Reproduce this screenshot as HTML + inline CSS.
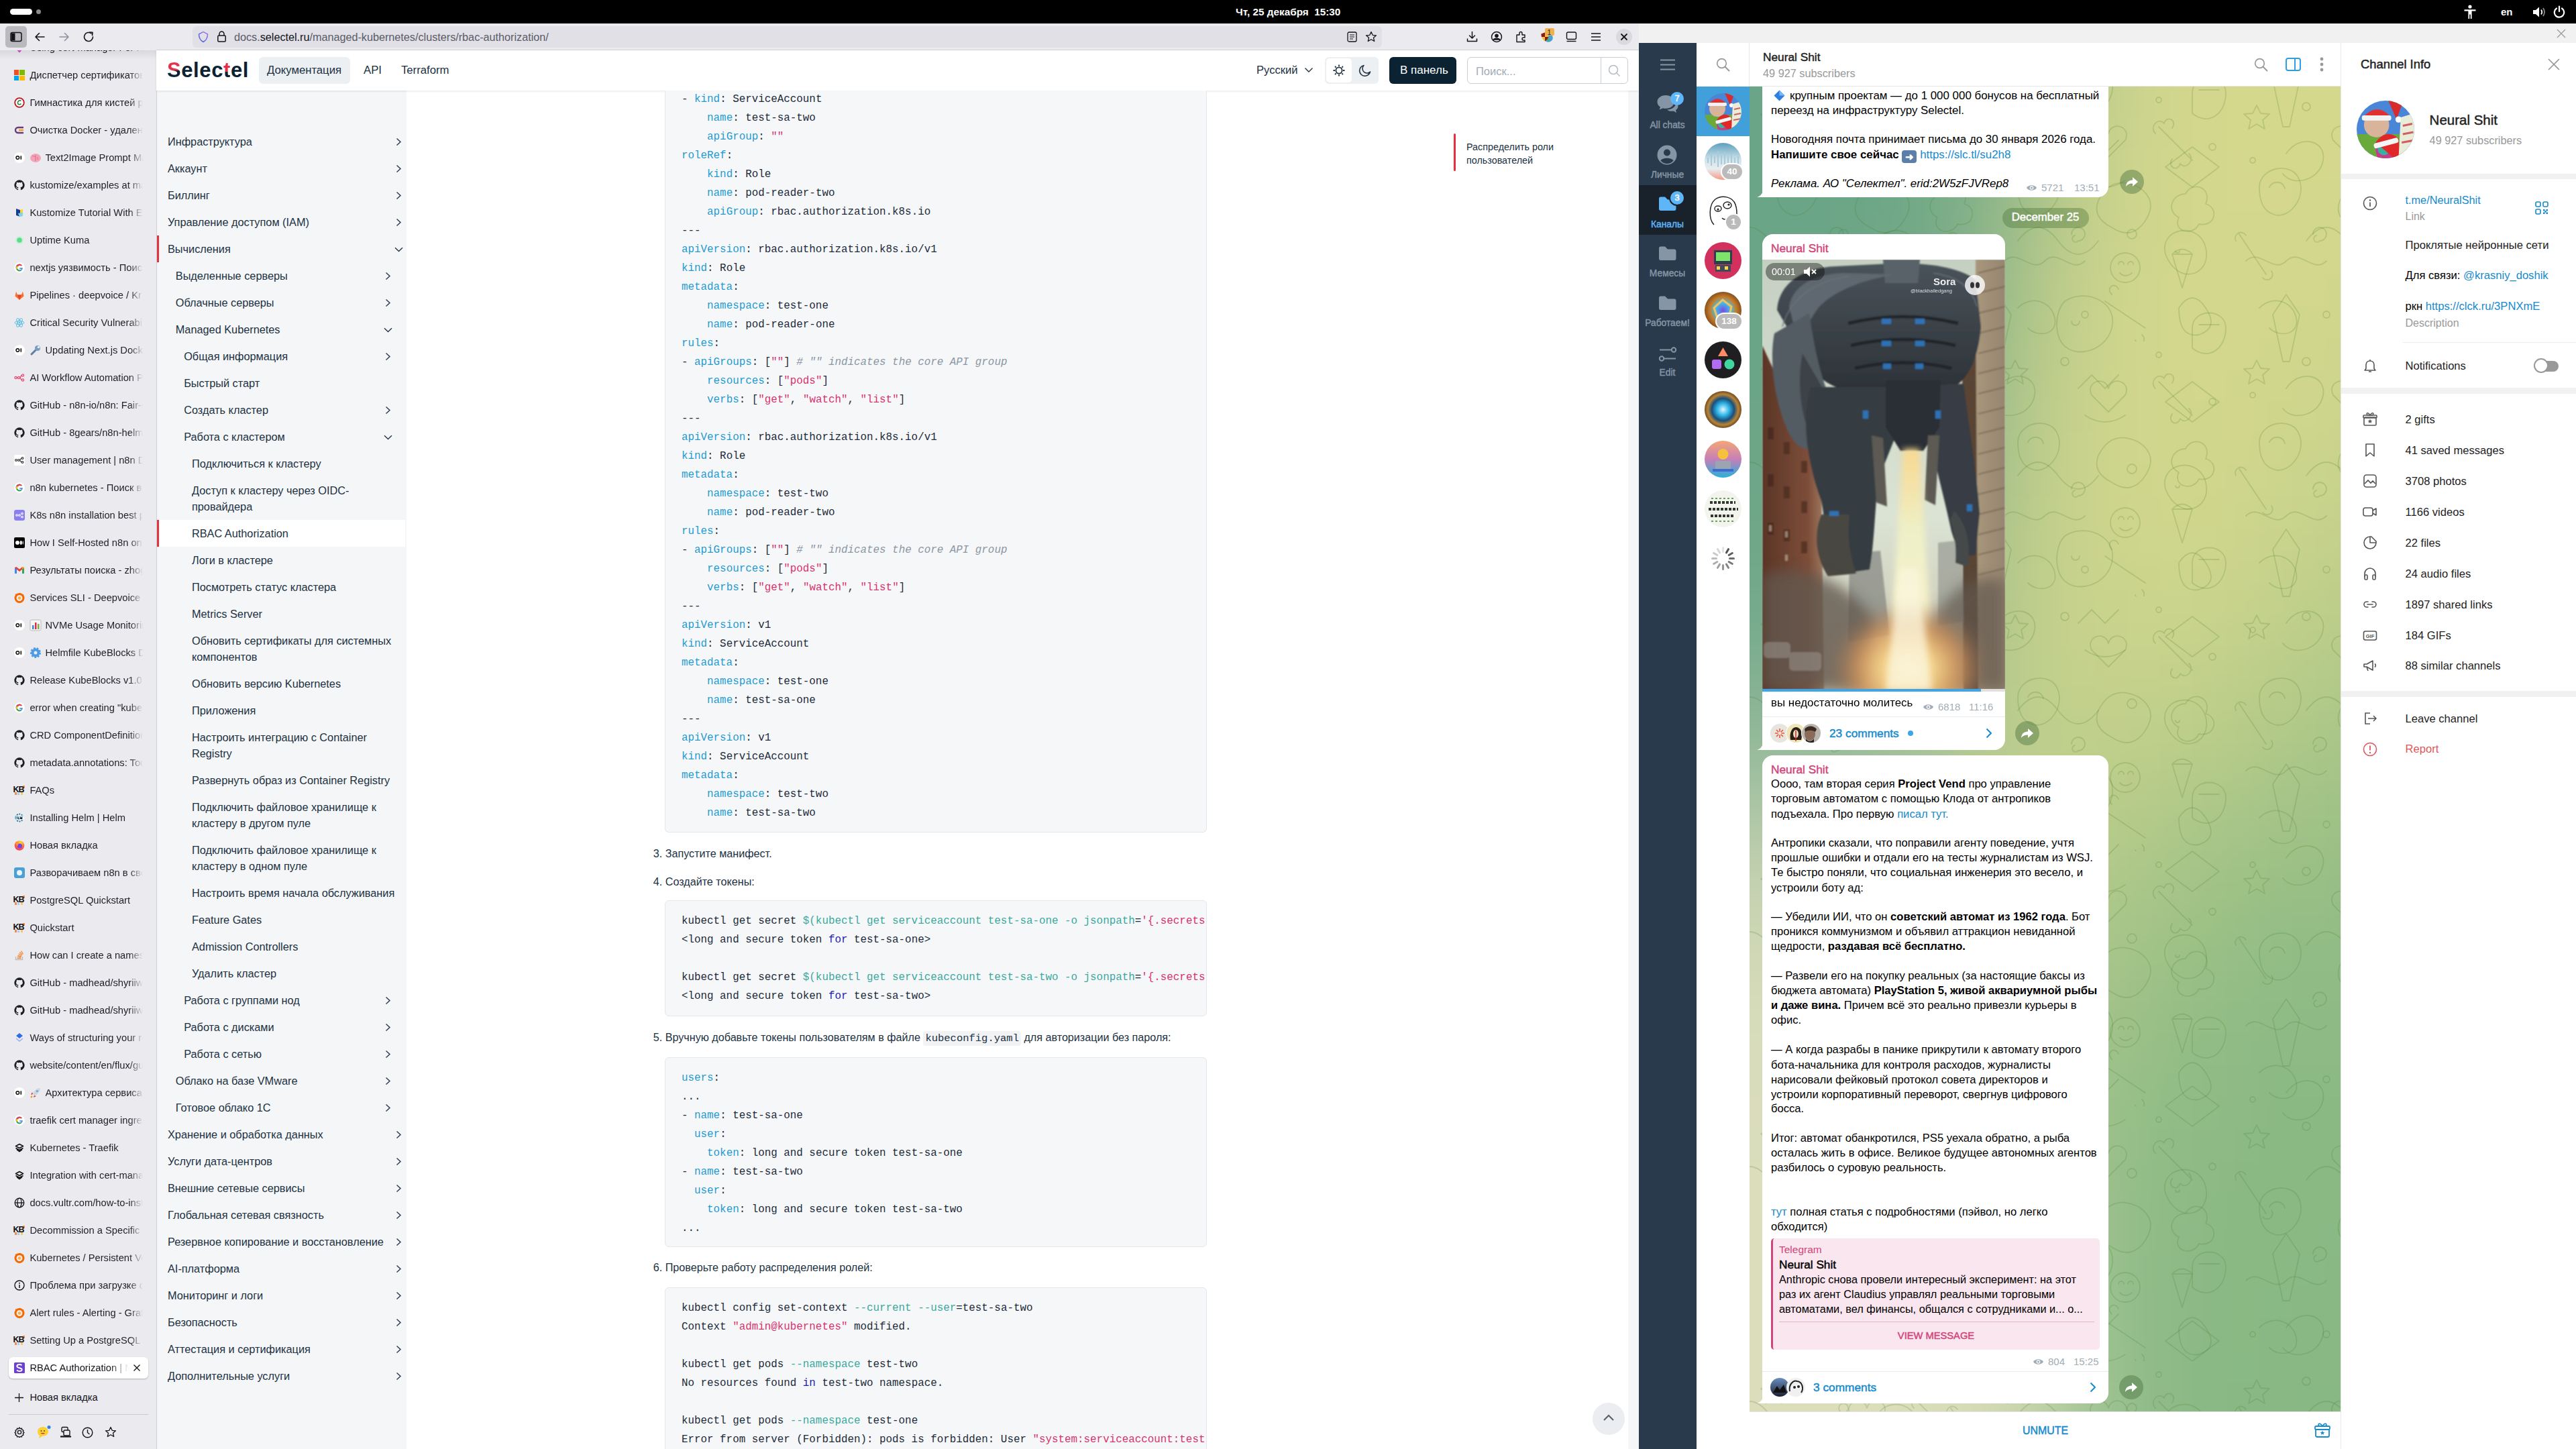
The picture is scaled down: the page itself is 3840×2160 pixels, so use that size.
<!DOCTYPE html>
<html><head><meta charset="utf-8"><title>screen</title>
<style>
html,body{margin:0;padding:0;}
body{width:3840px;height:2160px;overflow:hidden;position:relative;background:#000;font-family:"Liberation Sans",sans-serif;}
div{position:absolute;white-space:pre;box-sizing:border-box;}
.fl{position:absolute;overflow:hidden;}
b{font-weight:700;}
</style></head><body>
<div style="left:0px;top:0px;width:3840px;height:35px;background:#000;"></div><div style="left:15px;top:13px;width:33px;height:9px;background:#fff;border-radius:5px;"></div><div style="left:54px;top:14px;width:7px;height:7px;background:#8a8a8a;border-radius:50%;"></div><div style="left:1842.0px;top:7.5px;font-size:15.3px;line-height:20px;color:#fff;font-weight:700;">Чт, 25 декабря  15:30</div><svg style="position:absolute;left:3672px;top:7px;" width="20" height="22" viewBox="0 0 20 22"><circle cx="10" cy="3" r="2.6" fill="#fff"/><path d="M1.5 7.2 L18.5 7.2 L18.5 9.6 L12.6 9.6 L12.6 21 L10.8 21 L10.8 14.5 L9.2 14.5 L9.2 21 L7.4 21 L7.4 9.6 L1.5 9.6 Z" fill="#fff"/></svg><div style="left:3728.0px;top:7.5px;font-size:15px;line-height:20px;color:#fff;font-weight:700;">en</div><svg style="position:absolute;left:3775px;top:8px;" width="22" height="20" viewBox="0 0 22 20"><path d="M1 7 H5 L10 2.5 V17.5 L5 13 H1 Z" fill="#fff"/><path d="M13 6.5 Q15.5 10 13 13.5" stroke="#fff" stroke-width="1.8" fill="none"/><path d="M16 4 Q20 10 16 16" stroke="#888" stroke-width="1.8" fill="none"/></svg><svg style="position:absolute;left:3805px;top:8px;" width="20" height="20" viewBox="0 0 20 20"><path d="M6 4.5 A7.2 7.2 0 1 0 14 4.5" stroke="#fff" stroke-width="2.2" fill="none" stroke-linecap="round"/><path d="M10 1.5 V9" stroke="#fff" stroke-width="2.2" stroke-linecap="round"/></svg><div style="left:0px;top:35px;width:2443px;height:2125px;background:#ebebef;"></div><div style="left:233px;top:74px;width:2210px;height:1px;background:#d4d4da;"></div><div style="left:8px;top:39px;width:32px;height:32px;background:#b9b9be;border-radius:5px;"></div><svg style="position:absolute;left:15px;top:47px;" width="18" height="16" viewBox="0 0 18 16"><rect x="1" y="1.5" width="16" height="13" rx="2.5" fill="none" stroke="#15141a" stroke-width="1.5"/><rect x="2" y="2.5" width="5.5" height="11" fill="#15141a"/></svg><svg style="position:absolute;left:51px;top:47px;" width="17" height="16" viewBox="0 0 17 16"><path d="M15 8 H2 M7.5 2.5 L2 8 L7.5 13.5" fill="none" stroke="#15141a" stroke-width="1.6" stroke-linecap="round" stroke-linejoin="round"/></svg><svg style="position:absolute;left:87px;top:47px;transform:scaleX(-1);" width="17" height="16" viewBox="0 0 17 16"><path d="M15 8 H2 M7.5 2.5 L2 8 L7.5 13.5" fill="none" stroke="#8f8f9d" stroke-width="1.6" stroke-linecap="round" stroke-linejoin="round"/></svg><svg style="position:absolute;left:123px;top:46px;" width="18" height="18" viewBox="0 0 18 18"><path d="M15.5 9 A6.5 6.5 0 1 1 13.2 4" fill="none" stroke="#15141a" stroke-width="1.6" stroke-linecap="round"/><path d="M10.5 2 L15 2.2 L14.6 6.8" fill="none" stroke="#15141a" stroke-width="1.6" stroke-linecap="round" stroke-linejoin="round"/></svg><div style="left:287px;top:39px;width:1773px;height:32px;background:#e0e0e6;border-radius:6px;"></div><svg style="position:absolute;left:295px;top:46px;" width="16" height="18" viewBox="0 0 16 18"><defs><linearGradient id="sg" x1="0" y1="1" x2="1" y2="0"><stop offset="0" stop-color="#3a5be0"/><stop offset="1" stop-color="#9a6cf5"/></linearGradient></defs><path d="M8 1.5 L14.5 4.8 C14.5 10.5 12 14.5 8 16.5 C4 14.5 1.5 10.5 1.5 4.8 Z" fill="none" stroke="url(#sg)" stroke-width="1.4" stroke-linejoin="round"/></svg><svg style="position:absolute;left:323px;top:45px;" width="15" height="19" viewBox="0 0 15 19"><path d="M4 8 V5.5 A3.5 3.5 0 0 1 11 5.5 V8" fill="none" stroke="#15141a" stroke-width="1.5"/><rect x="1.8" y="8" width="11.4" height="9" rx="1.5" fill="none" stroke="#15141a" stroke-width="1.5"/></svg><div style="left:349.0px;top:44.0px;font-size:16.2px;line-height:22px;color:#5b5b66;white-space:pre;">docs.<span style="color:#15141a">selectel.ru</span>/managed-kubernetes/clusters/rbac-authorization/</div><svg style="position:absolute;left:2008px;top:47px;" width="15" height="16" viewBox="0 0 15 16"><rect x="1" y="1" width="13" height="14" rx="2" fill="none" stroke="#15141a" stroke-width="1.3"/><path d="M4 5 H11 M4 8 H11 M4 11 H9" stroke="#15141a" stroke-width="1.2"/></svg><svg style="position:absolute;left:2035px;top:46px;" width="18" height="17" viewBox="0 0 18 17"><path d="M9 1.5 L11.2 6.3 L16.5 6.8 L12.5 10.3 L13.7 15.5 L9 12.8 L4.3 15.5 L5.5 10.3 L1.5 6.8 L6.8 6.3 Z" fill="none" stroke="#15141a" stroke-width="1.3" stroke-linejoin="round"/></svg><svg style="position:absolute;left:2186px;top:46px;" width="17" height="17" viewBox="0 0 17 17"><path d="M8.5 1.5 V11 M4.5 7 L8.5 11 L12.5 7 M1.5 12 V15.5 H15.5 V12" fill="none" stroke="#15141a" stroke-width="1.5" stroke-linecap="round" stroke-linejoin="round"/></svg><svg style="position:absolute;left:2222px;top:46px;" width="18" height="18" viewBox="0 0 18 18"><circle cx="9" cy="9" r="7.5" fill="none" stroke="#15141a" stroke-width="1.5"/><circle cx="9" cy="7.3" r="2.8" fill="#15141a"/><path d="M3.8 13.8 C5.5 10.5 12.5 10.5 14.2 13.8" fill="#15141a" stroke="#15141a" stroke-width="1.5"/></svg><svg style="position:absolute;left:2259px;top:46px;" width="17" height="18" viewBox="0 0 17 18"><path d="M2 6 H6 V3.5 A2 2 0 0 1 10 3.5 V6 H14 V10 H12 A2 2 0 0 0 12 14 H14 V16.5 H2 Z" fill="none" stroke="#15141a" stroke-width="1.4" stroke-linejoin="round"/></svg><svg style="position:absolute;left:2295px;top:44px;" width="22" height="22" viewBox="0 0 22 22"><circle cx="13" cy="12" r="6.8" fill="#3fa2d9"/><path d="M9 9 C11 8 13 10 12 12 C11 14 14 15 15 17" stroke="#4cae4c" stroke-width="2.2" fill="none"/><path d="M2.5 6.5 L8 4.5 L13.5 6.5 C13.5 12 11 15.5 8 17.5 C5 15.5 2.5 12 2.5 6.5 Z" fill="#f1c232"/><path d="M2.5 6.5 L8 4.5 V11 H2.9 C2.6 9.5 2.5 8 2.5 6.5 Z M8 11 H13.1 C12.5 14 10.5 16.2 8 17.5 Z" fill="#8b1a1a"/></svg><div style="left:2303px;top:42px;width:14px;height:11px;background:#f0b14c;border-radius:2px;"></div><div style="left:2306.5px;top:41.5px;font-size:10.5px;line-height:12px;color:#222;">1</div><svg style="position:absolute;left:2334px;top:47px;" width="17" height="16" viewBox="0 0 17 16"><rect x="1.5" y="1" width="14" height="10.5" rx="2" fill="none" stroke="#15141a" stroke-width="1.4"/><path d="M1.5 14.5 H15.5" stroke="#15141a" stroke-width="1.4"/></svg><svg style="position:absolute;left:2371px;top:48px;" width="16" height="14" viewBox="0 0 16 14"><path d="M1 2 H15 M1 7 H15 M1 12 H15" stroke="#15141a" stroke-width="1.5"/></svg><div style="left:2409px;top:43px;width:24px;height:24px;background:#d9d9de;border-radius:50%;"></div><svg style="position:absolute;left:2415px;top:49px;" width="12" height="12" viewBox="0 0 12 12"><path d="M2 2 L10 10 M10 2 L2 10" stroke="#15141a" stroke-width="1.8" stroke-linecap="round"/></svg><div class="fl" style="left:0;top:75px;width:233px;height:2085px;"><svg style="position:absolute;left:20.6px;top:-12px;" width="16" height="16" viewBox="0 0 16 16"><path d="M8 2 L14 8 L8 14 L2 8 Z" fill="none" stroke="#e040e0" stroke-width="2"/></svg><div style="left:44.4px;top:-14.0px;font-size:14.7px;line-height:20px;color:#23222a;width:169px;overflow:hidden;-webkit-mask-image:linear-gradient(to right,#000 149px,transparent 169px);">Using cert-manager For Kubernetes</div><div style="left:20.6px;top:29px;width:7.5px;height:7.5px;background:#f25022;"></div><div style="left:29.1px;top:29px;width:7.5px;height:7.5px;background:#7fba00;"></div><div style="left:20.6px;top:37.5px;width:7.5px;height:7.5px;background:#00a4ef;"></div><div style="left:29.1px;top:37.5px;width:7.5px;height:7.5px;background:#ffb900;"></div><div style="left:44.4px;top:27.0px;font-size:14.7px;line-height:20px;color:#23222a;width:169px;overflow:hidden;-webkit-mask-image:linear-gradient(to right,#000 149px,transparent 169px);">Диспетчер сертификатов</div><svg style="position:absolute;left:20.6px;top:70px;" width="16" height="16" viewBox="0 0 16 16"><circle cx="8" cy="8" r="6.8" fill="#fff" stroke="#c0141c" stroke-width="1.8"/><path d="M10.5 5.3 C8 3.8 5 6 5.5 9 C6 11.5 9 11.2 10.5 9.5" fill="none" stroke="#1d7a3a" stroke-width="1.5"/></svg><div style="left:44.4px;top:68.0px;font-size:14.7px;line-height:20px;color:#23222a;width:169px;overflow:hidden;-webkit-mask-image:linear-gradient(to right,#000 149px,transparent 169px);">Гимнастика для кистей рук</div><svg style="position:absolute;left:20.6px;top:111px;" width="16" height="16" viewBox="0 0 16 16"><path d="M14 4 H6 A4 4 0 0 0 6 12 H14" fill="none" stroke="#6b3b7a" stroke-width="2.4"/><path d="M7 8 H14" stroke="#f0a020" stroke-width="2.4"/></svg><div style="left:44.4px;top:109.0px;font-size:14.7px;line-height:20px;color:#23222a;width:169px;overflow:hidden;-webkit-mask-image:linear-gradient(to right,#000 149px,transparent 169px);">Очистка Docker - удаление</div><svg style="position:absolute;left:20.6px;top:152px;" width="16" height="16" viewBox="0 0 16 16"><circle cx="8" cy="8" r="8" fill="#fff"/><circle cx="5.3" cy="8" r="2.3" fill="none" stroke="#111" stroke-width="1.5"/><path d="M10.3 5.3 V10.7" stroke="#111" stroke-width="1.6"/></svg><svg style="position:absolute;left:43.5px;top:151px;" width="18" height="18" viewBox="0 0 18 18"><ellipse cx="9" cy="9.5" rx="8" ry="6.5" fill="#f4a3b8"/><path d="M4 7 C6 5 7 9 9 7 M9 5 V14 M12 8 C13 10 11 11 13 12" stroke="#d86a8a" stroke-width="1" fill="none"/></svg><div style="left:67.5px;top:150.0px;font-size:14.7px;line-height:20px;color:#23222a;width:146px;overflow:hidden;-webkit-mask-image:linear-gradient(to right,#000 126px,transparent 146px);">Text2Image Prompt Maker</div><svg style="position:absolute;left:20.6px;top:193px;" width="16" height="16" viewBox="0 0 16 16"><path d="M8 0.3 A7.7 7.7 0 0 0 5.6 15.3 C6 15.4 6.1 15.1 6.1 14.9 V13.5 C3.9 14 3.5 12.5 3.5 12.5 C3.1 11.6 2.6 11.3 2.6 11.3 C1.9 10.8 2.7 10.8 2.7 10.8 C3.4 10.9 3.9 11.6 3.9 11.6 C4.6 12.8 5.7 12.4 6.1 12.2 C6.2 11.7 6.4 11.4 6.6 11.2 C4.9 11 3.1 10.4 3.1 7.4 C3.1 6.6 3.4 5.9 3.9 5.4 C3.8 5.2 3.5 4.4 4 3.4 C4 3.4 4.6 3.2 6.1 4.2 C6.7 4 7.4 4 8 4 C8.6 4 9.3 4 9.9 4.2 C11.4 3.2 12 3.4 12 3.4 C12.5 4.4 12.2 5.2 12.1 5.4 C12.6 5.9 12.9 6.6 12.9 7.4 C12.9 10.4 11.1 11 9.4 11.2 C9.7 11.5 9.9 11.9 9.9 12.6 V14.9 C9.9 15.1 10 15.4 10.4 15.3 A7.7 7.7 0 0 0 8 0.3 Z" fill="#1b1f23"/></svg><div style="left:44.4px;top:191.0px;font-size:14.7px;line-height:20px;color:#23222a;width:169px;overflow:hidden;-webkit-mask-image:linear-gradient(to right,#000 149px,transparent 169px);">kustomize/examples at master</div><svg style="position:absolute;left:20.6px;top:234px;" width="16" height="16" viewBox="0 0 16 16"><path d="M3 2 L9 4 V14 L3 12 Z" fill="#1b3c8c"/><path d="M9 4 L13 3 V13 L9 14 Z" fill="#f6d72a"/><path d="M6 9 L13 8 V13 L8 14 Z" fill="#7dd3f0"/></svg><div style="left:44.4px;top:232.0px;font-size:14.7px;line-height:20px;color:#23222a;width:169px;overflow:hidden;-webkit-mask-image:linear-gradient(to right,#000 149px,transparent 169px);">Kustomize Tutorial With Examples</div><svg style="position:absolute;left:20.6px;top:275px;" width="16" height="16" viewBox="0 0 16 16"><circle cx="8" cy="8" r="6" fill="#c9f0d6"/><circle cx="8" cy="8" r="3.8" fill="#5cdd8b"/></svg><div style="left:44.4px;top:273.0px;font-size:14.7px;line-height:20px;color:#23222a;width:169px;overflow:hidden;-webkit-mask-image:linear-gradient(to right,#000 149px,transparent 169px);">Uptime Kuma</div><svg style="position:absolute;left:20.6px;top:316px;" width="16" height="16" viewBox="0 0 16 16"><circle cx="8" cy="8" r="7.8" fill="#fff"/><path d="M12.6 8.2 H8.2 V9.8 H10.8 C10.4 11 9.4 11.6 8.2 11.6 A3.6 3.6 0 1 1 10.6 5.4 L11.8 4.2 A5.3 5.3 0 1 0 13 8.8 Z" fill="#4285f4"/><path d="M3.5 5.5 L5.3 6.8 A3.6 3.6 0 0 1 10.6 5.4 L11.8 4.2 A5.3 5.3 0 0 0 3.5 5.5 Z" fill="#ea4335"/><path d="M3.4 10.4 L5.2 9.2 A3.6 3.6 0 0 0 9.8 11.3 L11 12.6 A5.3 5.3 0 0 1 3.4 10.4 Z" fill="#34a853"/><path d="M3.5 5.5 A5.3 5.3 0 0 0 3.4 10.4 L5.2 9.2 A3.6 3.6 0 0 1 5.3 6.8 Z" fill="#fbbc05"/></svg><div style="left:44.4px;top:314.0px;font-size:14.7px;line-height:20px;color:#23222a;width:169px;overflow:hidden;-webkit-mask-image:linear-gradient(to right,#000 149px,transparent 169px);">nextjs уязвимость - Поиск</div><svg style="position:absolute;left:20.6px;top:357px;" width="16" height="16" viewBox="0 0 16 16"><path d="M8 15 L1.5 9.5 L3 2.5 L5 7.5 H11 L13 2.5 L14.5 9.5 Z" fill="#fc6d26"/><path d="M8 15 L5 7.5 H11 Z" fill="#e24329"/></svg><div style="left:44.4px;top:355.0px;font-size:14.7px;line-height:20px;color:#23222a;width:169px;overflow:hidden;-webkit-mask-image:linear-gradient(to right,#000 149px,transparent 169px);">Pipelines · deepvoice / Kr</div><svg style="position:absolute;left:20.6px;top:398px;" width="16" height="16" viewBox="0 0 16 16"><g fill="none" stroke="#61bfe0" stroke-width="1"><ellipse cx="8" cy="8" rx="7" ry="2.7"/><ellipse cx="8" cy="8" rx="7" ry="2.7" transform="rotate(60 8 8)"/><ellipse cx="8" cy="8" rx="7" ry="2.7" transform="rotate(-60 8 8)"/></g><circle cx="8" cy="8" r="1.4" fill="#61bfe0"/></svg><div style="left:44.4px;top:396.0px;font-size:14.7px;line-height:20px;color:#23222a;width:169px;overflow:hidden;-webkit-mask-image:linear-gradient(to right,#000 149px,transparent 169px);">Critical Security Vulnerability</div><svg style="position:absolute;left:20.6px;top:439px;" width="16" height="16" viewBox="0 0 16 16"><circle cx="8" cy="8" r="8" fill="#fff"/><circle cx="5.3" cy="8" r="2.3" fill="none" stroke="#111" stroke-width="1.5"/><path d="M10.3 5.3 V10.7" stroke="#111" stroke-width="1.6"/></svg><svg style="position:absolute;left:43.5px;top:438px;" width="18" height="18" viewBox="0 0 18 18"><path d="M3 15 L10 8" stroke="#5a7fa8" stroke-width="3" stroke-linecap="round"/><circle cx="12" cy="6" r="4" fill="#7a9cc0"/><circle cx="13.5" cy="4.5" r="1.8" fill="#ebebef"/></svg><div style="left:67.5px;top:437.0px;font-size:14.7px;line-height:20px;color:#23222a;width:146px;overflow:hidden;-webkit-mask-image:linear-gradient(to right,#000 126px,transparent 146px);">Updating Next.js Docker</div><svg style="position:absolute;left:20.6px;top:480px;" width="16" height="16" viewBox="0 0 16 16"><g fill="none" stroke="#ea4b71" stroke-width="1.3"><circle cx="2.5" cy="8" r="1.6"/><circle cx="7" cy="8" r="1.6"/><circle cx="13" cy="4.5" r="1.6"/><circle cx="13" cy="11.5" r="1.6"/><path d="M4 8 H5.5 M8.5 8 C10 8 10 4.5 11.5 4.5 M8.5 8 C10 8 10 11.5 11.5 11.5"/></g></svg><div style="left:44.4px;top:478.0px;font-size:14.7px;line-height:20px;color:#23222a;width:169px;overflow:hidden;-webkit-mask-image:linear-gradient(to right,#000 149px,transparent 169px);">AI Workflow Automation Platform</div><svg style="position:absolute;left:20.6px;top:521px;" width="16" height="16" viewBox="0 0 16 16"><path d="M8 0.3 A7.7 7.7 0 0 0 5.6 15.3 C6 15.4 6.1 15.1 6.1 14.9 V13.5 C3.9 14 3.5 12.5 3.5 12.5 C3.1 11.6 2.6 11.3 2.6 11.3 C1.9 10.8 2.7 10.8 2.7 10.8 C3.4 10.9 3.9 11.6 3.9 11.6 C4.6 12.8 5.7 12.4 6.1 12.2 C6.2 11.7 6.4 11.4 6.6 11.2 C4.9 11 3.1 10.4 3.1 7.4 C3.1 6.6 3.4 5.9 3.9 5.4 C3.8 5.2 3.5 4.4 4 3.4 C4 3.4 4.6 3.2 6.1 4.2 C6.7 4 7.4 4 8 4 C8.6 4 9.3 4 9.9 4.2 C11.4 3.2 12 3.4 12 3.4 C12.5 4.4 12.2 5.2 12.1 5.4 C12.6 5.9 12.9 6.6 12.9 7.4 C12.9 10.4 11.1 11 9.4 11.2 C9.7 11.5 9.9 11.9 9.9 12.6 V14.9 C9.9 15.1 10 15.4 10.4 15.3 A7.7 7.7 0 0 0 8 0.3 Z" fill="#1b1f23"/></svg><div style="left:44.4px;top:519.0px;font-size:14.7px;line-height:20px;color:#23222a;width:169px;overflow:hidden;-webkit-mask-image:linear-gradient(to right,#000 149px,transparent 169px);">GitHub - n8n-io/n8n: Fair-code</div><svg style="position:absolute;left:20.6px;top:562px;" width="16" height="16" viewBox="0 0 16 16"><path d="M8 0.3 A7.7 7.7 0 0 0 5.6 15.3 C6 15.4 6.1 15.1 6.1 14.9 V13.5 C3.9 14 3.5 12.5 3.5 12.5 C3.1 11.6 2.6 11.3 2.6 11.3 C1.9 10.8 2.7 10.8 2.7 10.8 C3.4 10.9 3.9 11.6 3.9 11.6 C4.6 12.8 5.7 12.4 6.1 12.2 C6.2 11.7 6.4 11.4 6.6 11.2 C4.9 11 3.1 10.4 3.1 7.4 C3.1 6.6 3.4 5.9 3.9 5.4 C3.8 5.2 3.5 4.4 4 3.4 C4 3.4 4.6 3.2 6.1 4.2 C6.7 4 7.4 4 8 4 C8.6 4 9.3 4 9.9 4.2 C11.4 3.2 12 3.4 12 3.4 C12.5 4.4 12.2 5.2 12.1 5.4 C12.6 5.9 12.9 6.6 12.9 7.4 C12.9 10.4 11.1 11 9.4 11.2 C9.7 11.5 9.9 11.9 9.9 12.6 V14.9 C9.9 15.1 10 15.4 10.4 15.3 A7.7 7.7 0 0 0 8 0.3 Z" fill="#1b1f23"/></svg><div style="left:44.4px;top:560.0px;font-size:14.7px;line-height:20px;color:#23222a;width:169px;overflow:hidden;-webkit-mask-image:linear-gradient(to right,#000 149px,transparent 169px);">GitHub - 8gears/n8n-helm-chart</div><svg style="position:absolute;left:20.6px;top:603px;" width="16" height="16" viewBox="0 0 16 16"><rect x="0" y="0" width="16" height="16" rx="2" fill="#fff"/><g fill="none" stroke="#444" stroke-width="1.2"><circle cx="3" cy="8" r="1.4"/><circle cx="7" cy="8" r="1.4"/><circle cx="12.5" cy="5" r="1.4"/><circle cx="12.5" cy="11" r="1.4"/><path d="M8.4 8 L11 5 M8.4 8 L11 11"/></g></svg><div style="left:44.4px;top:601.0px;font-size:14.7px;line-height:20px;color:#23222a;width:169px;overflow:hidden;-webkit-mask-image:linear-gradient(to right,#000 149px,transparent 169px);">User management | n8n Docs</div><svg style="position:absolute;left:20.6px;top:644px;" width="16" height="16" viewBox="0 0 16 16"><circle cx="8" cy="8" r="7.8" fill="#fff"/><path d="M12.6 8.2 H8.2 V9.8 H10.8 C10.4 11 9.4 11.6 8.2 11.6 A3.6 3.6 0 1 1 10.6 5.4 L11.8 4.2 A5.3 5.3 0 1 0 13 8.8 Z" fill="#4285f4"/><path d="M3.5 5.5 L5.3 6.8 A3.6 3.6 0 0 1 10.6 5.4 L11.8 4.2 A5.3 5.3 0 0 0 3.5 5.5 Z" fill="#ea4335"/><path d="M3.4 10.4 L5.2 9.2 A3.6 3.6 0 0 0 9.8 11.3 L11 12.6 A5.3 5.3 0 0 1 3.4 10.4 Z" fill="#34a853"/><path d="M3.5 5.5 A5.3 5.3 0 0 0 3.4 10.4 L5.2 9.2 A3.6 3.6 0 0 1 5.3 6.8 Z" fill="#fbbc05"/></svg><div style="left:44.4px;top:642.0px;font-size:14.7px;line-height:20px;color:#23222a;width:169px;overflow:hidden;-webkit-mask-image:linear-gradient(to right,#000 149px,transparent 169px);">n8n kubernetes - Поиск в Google</div><svg style="position:absolute;left:20.6px;top:685px;" width="16" height="16" viewBox="0 0 16 16"><rect x="0" y="0" width="16" height="16" rx="3" fill="#8a7ff0"/><g fill="none" stroke="#fff" stroke-width="1.1"><circle cx="4" cy="8" r="1.3"/><circle cx="8" cy="8" r="1.3"/><circle cx="12" cy="5.5" r="1.3"/><circle cx="12" cy="10.5" r="1.3"/></g></svg><div style="left:44.4px;top:683.0px;font-size:14.7px;line-height:20px;color:#23222a;width:169px;overflow:hidden;-webkit-mask-image:linear-gradient(to right,#000 149px,transparent 169px);">K8s n8n installation best practices</div><svg style="position:absolute;left:20.6px;top:726px;" width="16" height="16" viewBox="0 0 16 16"><rect x="0" y="0" width="16" height="16" rx="2" fill="#000"/><circle cx="5" cy="8" r="3" fill="#fff"/><ellipse cx="10.3" cy="8" rx="1.6" ry="3" fill="#fff"/><ellipse cx="13.3" cy="8" rx=".6" ry="2.7" fill="#fff"/></svg><div style="left:44.4px;top:724.0px;font-size:14.7px;line-height:20px;color:#23222a;width:169px;overflow:hidden;-webkit-mask-image:linear-gradient(to right,#000 149px,transparent 169px);">How I Self-Hosted n8n on Kubernetes</div><svg style="position:absolute;left:20.6px;top:767px;" width="16" height="16" viewBox="0 0 16 16"><path d="M1 4 V13 H4 V7 L8 10 L12 7 V13 H15 V4 L12.5 3 L8 6.5 L3.5 3 Z" fill="#ea4335"/><path d="M1 4 V13 H4 V7 Z" fill="#4285f4"/><path d="M12 7 V13 H15 V4 Z" fill="#34a853"/><path d="M12 7 L15 4 L12.5 3 Z" fill="#fbbc04"/></svg><div style="left:44.4px;top:765.0px;font-size:14.7px;line-height:20px;color:#23222a;width:169px;overflow:hidden;-webkit-mask-image:linear-gradient(to right,#000 149px,transparent 169px);">Результаты поиска - zhoga</div><svg style="position:absolute;left:20.6px;top:808px;" width="16" height="16" viewBox="0 0 16 16"><circle cx="8" cy="8.5" r="6" fill="none" stroke="#f46800" stroke-width="3"/><circle cx="8" cy="8.5" r="2.2" fill="#fbb03b"/><path d="M8 1 L9.5 3 M13 3 L13.5 5.5 M2.5 4 L3.5 2.5" stroke="#f46800" stroke-width="2"/></svg><div style="left:44.4px;top:806.0px;font-size:14.7px;line-height:20px;color:#23222a;width:169px;overflow:hidden;-webkit-mask-image:linear-gradient(to right,#000 149px,transparent 169px);">Services SLI - Deepvoice - Grafana</div><svg style="position:absolute;left:20.6px;top:849px;" width="16" height="16" viewBox="0 0 16 16"><circle cx="8" cy="8" r="8" fill="#fff"/><circle cx="5.3" cy="8" r="2.3" fill="none" stroke="#111" stroke-width="1.5"/><path d="M10.3 5.3 V10.7" stroke="#111" stroke-width="1.6"/></svg><svg style="position:absolute;left:43.5px;top:848px;" width="18" height="18" viewBox="0 0 18 18"><rect x="1" y="1" width="16" height="16" rx="2" fill="#f5f5f5" stroke="#bbb"/><rect x="4" y="9" width="2.5" height="6" fill="#3b88c3"/><rect x="8" y="5" width="2.5" height="10" fill="#dd2e44"/><rect x="12" y="7" width="2.5" height="8" fill="#77b255"/></svg><div style="left:67.5px;top:847.0px;font-size:14.7px;line-height:20px;color:#23222a;width:146px;overflow:hidden;-webkit-mask-image:linear-gradient(to right,#000 126px,transparent 146px);">NVMe Usage Monitoring</div><svg style="position:absolute;left:20.6px;top:890px;" width="16" height="16" viewBox="0 0 16 16"><circle cx="8" cy="8" r="8" fill="#fff"/><circle cx="5.3" cy="8" r="2.3" fill="none" stroke="#111" stroke-width="1.5"/><path d="M10.3 5.3 V10.7" stroke="#111" stroke-width="1.6"/></svg><svg style="position:absolute;left:43.5px;top:889px;" width="18" height="18" viewBox="0 0 18 18"><circle cx="9" cy="9" r="6.5" fill="#4d9be6" stroke="#4d9be6" stroke-width="3" stroke-dasharray="2.5 2"/><circle cx="9" cy="9" r="2.5" fill="#ebebef"/></svg><div style="left:67.5px;top:888.0px;font-size:14.7px;line-height:20px;color:#23222a;width:146px;overflow:hidden;-webkit-mask-image:linear-gradient(to right,#000 126px,transparent 146px);">Helmfile KubeBlocks Deploy</div><svg style="position:absolute;left:20.6px;top:931px;" width="16" height="16" viewBox="0 0 16 16"><path d="M8 0.3 A7.7 7.7 0 0 0 5.6 15.3 C6 15.4 6.1 15.1 6.1 14.9 V13.5 C3.9 14 3.5 12.5 3.5 12.5 C3.1 11.6 2.6 11.3 2.6 11.3 C1.9 10.8 2.7 10.8 2.7 10.8 C3.4 10.9 3.9 11.6 3.9 11.6 C4.6 12.8 5.7 12.4 6.1 12.2 C6.2 11.7 6.4 11.4 6.6 11.2 C4.9 11 3.1 10.4 3.1 7.4 C3.1 6.6 3.4 5.9 3.9 5.4 C3.8 5.2 3.5 4.4 4 3.4 C4 3.4 4.6 3.2 6.1 4.2 C6.7 4 7.4 4 8 4 C8.6 4 9.3 4 9.9 4.2 C11.4 3.2 12 3.4 12 3.4 C12.5 4.4 12.2 5.2 12.1 5.4 C12.6 5.9 12.9 6.6 12.9 7.4 C12.9 10.4 11.1 11 9.4 11.2 C9.7 11.5 9.9 11.9 9.9 12.6 V14.9 C9.9 15.1 10 15.4 10.4 15.3 A7.7 7.7 0 0 0 8 0.3 Z" fill="#1b1f23"/></svg><div style="left:44.4px;top:929.0px;font-size:14.7px;line-height:20px;color:#23222a;width:169px;overflow:hidden;-webkit-mask-image:linear-gradient(to right,#000 149px,transparent 169px);">Release KubeBlocks v1.0.1</div><svg style="position:absolute;left:20.6px;top:972px;" width="16" height="16" viewBox="0 0 16 16"><circle cx="8" cy="8" r="7.8" fill="#fff"/><path d="M12.6 8.2 H8.2 V9.8 H10.8 C10.4 11 9.4 11.6 8.2 11.6 A3.6 3.6 0 1 1 10.6 5.4 L11.8 4.2 A5.3 5.3 0 1 0 13 8.8 Z" fill="#4285f4"/><path d="M3.5 5.5 L5.3 6.8 A3.6 3.6 0 0 1 10.6 5.4 L11.8 4.2 A5.3 5.3 0 0 0 3.5 5.5 Z" fill="#ea4335"/><path d="M3.4 10.4 L5.2 9.2 A3.6 3.6 0 0 0 9.8 11.3 L11 12.6 A5.3 5.3 0 0 1 3.4 10.4 Z" fill="#34a853"/><path d="M3.5 5.5 A5.3 5.3 0 0 0 3.4 10.4 L5.2 9.2 A3.6 3.6 0 0 1 5.3 6.8 Z" fill="#fbbc05"/></svg><div style="left:44.4px;top:970.0px;font-size:14.7px;line-height:20px;color:#23222a;width:169px;overflow:hidden;-webkit-mask-image:linear-gradient(to right,#000 149px,transparent 169px);">error when creating "kubeblocks"</div><svg style="position:absolute;left:20.6px;top:1013px;" width="16" height="16" viewBox="0 0 16 16"><path d="M8 0.3 A7.7 7.7 0 0 0 5.6 15.3 C6 15.4 6.1 15.1 6.1 14.9 V13.5 C3.9 14 3.5 12.5 3.5 12.5 C3.1 11.6 2.6 11.3 2.6 11.3 C1.9 10.8 2.7 10.8 2.7 10.8 C3.4 10.9 3.9 11.6 3.9 11.6 C4.6 12.8 5.7 12.4 6.1 12.2 C6.2 11.7 6.4 11.4 6.6 11.2 C4.9 11 3.1 10.4 3.1 7.4 C3.1 6.6 3.4 5.9 3.9 5.4 C3.8 5.2 3.5 4.4 4 3.4 C4 3.4 4.6 3.2 6.1 4.2 C6.7 4 7.4 4 8 4 C8.6 4 9.3 4 9.9 4.2 C11.4 3.2 12 3.4 12 3.4 C12.5 4.4 12.2 5.2 12.1 5.4 C12.6 5.9 12.9 6.6 12.9 7.4 C12.9 10.4 11.1 11 9.4 11.2 C9.7 11.5 9.9 11.9 9.9 12.6 V14.9 C9.9 15.1 10 15.4 10.4 15.3 A7.7 7.7 0 0 0 8 0.3 Z" fill="#1b1f23"/></svg><div style="left:44.4px;top:1011.0px;font-size:14.7px;line-height:20px;color:#23222a;width:169px;overflow:hidden;-webkit-mask-image:linear-gradient(to right,#000 149px,transparent 169px);">CRD ComponentDefinition</div><svg style="position:absolute;left:20.6px;top:1054px;" width="16" height="16" viewBox="0 0 16 16"><path d="M8 0.3 A7.7 7.7 0 0 0 5.6 15.3 C6 15.4 6.1 15.1 6.1 14.9 V13.5 C3.9 14 3.5 12.5 3.5 12.5 C3.1 11.6 2.6 11.3 2.6 11.3 C1.9 10.8 2.7 10.8 2.7 10.8 C3.4 10.9 3.9 11.6 3.9 11.6 C4.6 12.8 5.7 12.4 6.1 12.2 C6.2 11.7 6.4 11.4 6.6 11.2 C4.9 11 3.1 10.4 3.1 7.4 C3.1 6.6 3.4 5.9 3.9 5.4 C3.8 5.2 3.5 4.4 4 3.4 C4 3.4 4.6 3.2 6.1 4.2 C6.7 4 7.4 4 8 4 C8.6 4 9.3 4 9.9 4.2 C11.4 3.2 12 3.4 12 3.4 C12.5 4.4 12.2 5.2 12.1 5.4 C12.6 5.9 12.9 6.6 12.9 7.4 C12.9 10.4 11.1 11 9.4 11.2 C9.7 11.5 9.9 11.9 9.9 12.6 V14.9 C9.9 15.1 10 15.4 10.4 15.3 A7.7 7.7 0 0 0 8 0.3 Z" fill="#1b1f23"/></svg><div style="left:44.4px;top:1052.0px;font-size:14.7px;line-height:20px;color:#23222a;width:169px;overflow:hidden;-webkit-mask-image:linear-gradient(to right,#000 149px,transparent 169px);">metadata.annotations: Too long</div><svg style="position:absolute;left:20.6px;top:1095px;" width="17" height="16" viewBox="0 0 17 16"><rect x="1" y="11" width="3" height="4" fill="#f58b4b"/><rect x="5" y="12" width="3" height="3" fill="#9ed0f5"/><rect x="10" y="11" width="3" height="4" fill="#f3c96b"/><rect x="13" y="1" width="3" height="4" fill="#f58b4b"/></svg><div style="left:19.6px;top:1093px;font-size:12.5px;line-height:18px;font-weight:700;color:#111;letter-spacing:-1px;">KB</div><div style="left:44.4px;top:1093.0px;font-size:14.7px;line-height:20px;color:#23222a;width:169px;overflow:hidden;-webkit-mask-image:linear-gradient(to right,#000 149px,transparent 169px);">FAQs</div><svg style="position:absolute;left:20.6px;top:1136px;" width="16" height="16" viewBox="0 0 16 16"><circle cx="8" cy="8" r="5.5" fill="none" stroke="#277a9f" stroke-width="1.8" stroke-dasharray="2 1.5"/><rect x="1" y="6" width="14" height="4.5" fill="#fff"/><path d="M2 10 V6 M2 8 H4.5 M4.5 6 V10 M6 6 V10 H8 M9 10 V6 L10.5 8 L12 6 V10" stroke="#277a9f" stroke-width="1"/></svg><div style="left:44.4px;top:1134.0px;font-size:14.7px;line-height:20px;color:#23222a;width:169px;overflow:hidden;-webkit-mask-image:linear-gradient(to right,#000 149px,transparent 169px);">Installing Helm | Helm</div><svg style="position:absolute;left:20.6px;top:1177px;" width="16" height="16" viewBox="0 0 16 16"><defs><radialGradient id="ffg" cx=".6" cy=".2" r="1"><stop offset="0" stop-color="#ffe226"/><stop offset=".45" stop-color="#ff7139"/><stop offset="1" stop-color="#e31587"/></radialGradient></defs><circle cx="8" cy="8.5" r="7.3" fill="url(#ffg)"/><circle cx="8.5" cy="9" r="3.6" fill="#7542e5"/><path d="M2 6 C3 4 6 3 8 5 C6 5 5 7 6 9" fill="#ff9a2e"/></svg><div style="left:44.4px;top:1175.0px;font-size:14.7px;line-height:20px;color:#23222a;width:169px;overflow:hidden;-webkit-mask-image:linear-gradient(to right,#000 149px,transparent 169px);">Новая вкладка</div><svg style="position:absolute;left:20.6px;top:1218px;" width="16" height="16" viewBox="0 0 16 16"><rect x="0" y="0" width="16" height="16" rx="3" fill="#4aa0d5"/><circle cx="8" cy="8" r="4" fill="#e9f5fb"/></svg><div style="left:44.4px;top:1216.0px;font-size:14.7px;line-height:20px;color:#23222a;width:169px;overflow:hidden;-webkit-mask-image:linear-gradient(to right,#000 149px,transparent 169px);">Разворачиваем n8n в своем</div><svg style="position:absolute;left:20.6px;top:1259px;" width="17" height="16" viewBox="0 0 17 16"><rect x="1" y="11" width="3" height="4" fill="#f58b4b"/><rect x="5" y="12" width="3" height="3" fill="#9ed0f5"/><rect x="10" y="11" width="3" height="4" fill="#f3c96b"/><rect x="13" y="1" width="3" height="4" fill="#f58b4b"/></svg><div style="left:19.6px;top:1257px;font-size:12.5px;line-height:18px;font-weight:700;color:#111;letter-spacing:-1px;">KB</div><div style="left:44.4px;top:1257.0px;font-size:14.7px;line-height:20px;color:#23222a;width:169px;overflow:hidden;-webkit-mask-image:linear-gradient(to right,#000 149px,transparent 169px);">PostgreSQL Quickstart</div><svg style="position:absolute;left:20.6px;top:1300px;" width="17" height="16" viewBox="0 0 17 16"><rect x="1" y="11" width="3" height="4" fill="#f58b4b"/><rect x="5" y="12" width="3" height="3" fill="#9ed0f5"/><rect x="10" y="11" width="3" height="4" fill="#f3c96b"/><rect x="13" y="1" width="3" height="4" fill="#f58b4b"/></svg><div style="left:19.6px;top:1298px;font-size:12.5px;line-height:18px;font-weight:700;color:#111;letter-spacing:-1px;">KB</div><div style="left:44.4px;top:1298.0px;font-size:14.7px;line-height:20px;color:#23222a;width:169px;overflow:hidden;-webkit-mask-image:linear-gradient(to right,#000 149px,transparent 169px);">Quickstart</div><svg style="position:absolute;left:20.6px;top:1341px;" width="16" height="16" viewBox="0 0 16 16"><path d="M2.5 10 V14.5 H12.5 V10" fill="none" stroke="#bcbbbb" stroke-width="1.3"/><path d="M4.5 12.5 H10.5 M4.7 10.5 L10.5 11.2 M5.3 8.3 L10.8 9.8 M6.5 5.8 L11.5 8.5 M8.3 3.5 L12.5 7.3 M10.5 1.5 L13.5 6" stroke="#f48024" stroke-width="1.2"/></svg><div style="left:44.4px;top:1339.0px;font-size:14.7px;line-height:20px;color:#23222a;width:169px;overflow:hidden;-webkit-mask-image:linear-gradient(to right,#000 149px,transparent 169px);">How can I create a namespace</div><svg style="position:absolute;left:20.6px;top:1382px;" width="16" height="16" viewBox="0 0 16 16"><path d="M8 0.3 A7.7 7.7 0 0 0 5.6 15.3 C6 15.4 6.1 15.1 6.1 14.9 V13.5 C3.9 14 3.5 12.5 3.5 12.5 C3.1 11.6 2.6 11.3 2.6 11.3 C1.9 10.8 2.7 10.8 2.7 10.8 C3.4 10.9 3.9 11.6 3.9 11.6 C4.6 12.8 5.7 12.4 6.1 12.2 C6.2 11.7 6.4 11.4 6.6 11.2 C4.9 11 3.1 10.4 3.1 7.4 C3.1 6.6 3.4 5.9 3.9 5.4 C3.8 5.2 3.5 4.4 4 3.4 C4 3.4 4.6 3.2 6.1 4.2 C6.7 4 7.4 4 8 4 C8.6 4 9.3 4 9.9 4.2 C11.4 3.2 12 3.4 12 3.4 C12.5 4.4 12.2 5.2 12.1 5.4 C12.6 5.9 12.9 6.6 12.9 7.4 C12.9 10.4 11.1 11 9.4 11.2 C9.7 11.5 9.9 11.9 9.9 12.6 V14.9 C9.9 15.1 10 15.4 10.4 15.3 A7.7 7.7 0 0 0 8 0.3 Z" fill="#1b1f23"/></svg><div style="left:44.4px;top:1380.0px;font-size:14.7px;line-height:20px;color:#23222a;width:169px;overflow:hidden;-webkit-mask-image:linear-gradient(to right,#000 149px,transparent 169px);">GitHub - madhead/shyriiwook</div><svg style="position:absolute;left:20.6px;top:1423px;" width="16" height="16" viewBox="0 0 16 16"><path d="M8 0.3 A7.7 7.7 0 0 0 5.6 15.3 C6 15.4 6.1 15.1 6.1 14.9 V13.5 C3.9 14 3.5 12.5 3.5 12.5 C3.1 11.6 2.6 11.3 2.6 11.3 C1.9 10.8 2.7 10.8 2.7 10.8 C3.4 10.9 3.9 11.6 3.9 11.6 C4.6 12.8 5.7 12.4 6.1 12.2 C6.2 11.7 6.4 11.4 6.6 11.2 C4.9 11 3.1 10.4 3.1 7.4 C3.1 6.6 3.4 5.9 3.9 5.4 C3.8 5.2 3.5 4.4 4 3.4 C4 3.4 4.6 3.2 6.1 4.2 C6.7 4 7.4 4 8 4 C8.6 4 9.3 4 9.9 4.2 C11.4 3.2 12 3.4 12 3.4 C12.5 4.4 12.2 5.2 12.1 5.4 C12.6 5.9 12.9 6.6 12.9 7.4 C12.9 10.4 11.1 11 9.4 11.2 C9.7 11.5 9.9 11.9 9.9 12.6 V14.9 C9.9 15.1 10 15.4 10.4 15.3 A7.7 7.7 0 0 0 8 0.3 Z" fill="#1b1f23"/></svg><div style="left:44.4px;top:1421.0px;font-size:14.7px;line-height:20px;color:#23222a;width:169px;overflow:hidden;-webkit-mask-image:linear-gradient(to right,#000 149px,transparent 169px);">GitHub - madhead/shyriiwook</div><svg style="position:absolute;left:20.6px;top:1464px;" width="16" height="16" viewBox="0 0 16 16"><path d="M8 1 L13 5 L8 9 L3 5 Z" fill="#326ce5"/><path d="M3 9 L8 13 L13 9" fill="none" stroke="#8fb0f5" stroke-width="1.4"/></svg><div style="left:44.4px;top:1462.0px;font-size:14.7px;line-height:20px;color:#23222a;width:169px;overflow:hidden;-webkit-mask-image:linear-gradient(to right,#000 149px,transparent 169px);">Ways of structuring your repositories</div><svg style="position:absolute;left:20.6px;top:1505px;" width="16" height="16" viewBox="0 0 16 16"><path d="M8 0.3 A7.7 7.7 0 0 0 5.6 15.3 C6 15.4 6.1 15.1 6.1 14.9 V13.5 C3.9 14 3.5 12.5 3.5 12.5 C3.1 11.6 2.6 11.3 2.6 11.3 C1.9 10.8 2.7 10.8 2.7 10.8 C3.4 10.9 3.9 11.6 3.9 11.6 C4.6 12.8 5.7 12.4 6.1 12.2 C6.2 11.7 6.4 11.4 6.6 11.2 C4.9 11 3.1 10.4 3.1 7.4 C3.1 6.6 3.4 5.9 3.9 5.4 C3.8 5.2 3.5 4.4 4 3.4 C4 3.4 4.6 3.2 6.1 4.2 C6.7 4 7.4 4 8 4 C8.6 4 9.3 4 9.9 4.2 C11.4 3.2 12 3.4 12 3.4 C12.5 4.4 12.2 5.2 12.1 5.4 C12.6 5.9 12.9 6.6 12.9 7.4 C12.9 10.4 11.1 11 9.4 11.2 C9.7 11.5 9.9 11.9 9.9 12.6 V14.9 C9.9 15.1 10 15.4 10.4 15.3 A7.7 7.7 0 0 0 8 0.3 Z" fill="#1b1f23"/></svg><div style="left:44.4px;top:1503.0px;font-size:14.7px;line-height:20px;color:#23222a;width:169px;overflow:hidden;-webkit-mask-image:linear-gradient(to right,#000 149px,transparent 169px);">website/content/en/flux/guides</div><svg style="position:absolute;left:20.6px;top:1546px;" width="16" height="16" viewBox="0 0 16 16"><circle cx="8" cy="8" r="8" fill="#fff"/><circle cx="5.3" cy="8" r="2.3" fill="none" stroke="#111" stroke-width="1.5"/><path d="M10.3 5.3 V10.7" stroke="#111" stroke-width="1.6"/></svg><svg style="position:absolute;left:43.5px;top:1545px;" width="18" height="18" viewBox="0 0 18 18"><path d="M16 2 C10 2 6 7 5 11 L7 13 C11 12 16 8 16 2 Z" fill="#ccd6dd"/><path d="M5 11 L2 12 L4 8 Z M7 13 L6 16 L10 14 Z" fill="#dd2e44"/><circle cx="11.5" cy="6.5" r="1.6" fill="#55acee"/><path d="M4 14 L2 16" stroke="#f4900c" stroke-width="2"/></svg><div style="left:67.5px;top:1544.0px;font-size:14.7px;line-height:20px;color:#23222a;width:146px;overflow:hidden;-webkit-mask-image:linear-gradient(to right,#000 126px,transparent 146px);">Архитектура сервиса</div><svg style="position:absolute;left:20.6px;top:1587px;" width="16" height="16" viewBox="0 0 16 16"><circle cx="8" cy="8" r="7.8" fill="#fff"/><path d="M12.6 8.2 H8.2 V9.8 H10.8 C10.4 11 9.4 11.6 8.2 11.6 A3.6 3.6 0 1 1 10.6 5.4 L11.8 4.2 A5.3 5.3 0 1 0 13 8.8 Z" fill="#4285f4"/><path d="M3.5 5.5 L5.3 6.8 A3.6 3.6 0 0 1 10.6 5.4 L11.8 4.2 A5.3 5.3 0 0 0 3.5 5.5 Z" fill="#ea4335"/><path d="M3.4 10.4 L5.2 9.2 A3.6 3.6 0 0 0 9.8 11.3 L11 12.6 A5.3 5.3 0 0 1 3.4 10.4 Z" fill="#34a853"/><path d="M3.5 5.5 A5.3 5.3 0 0 0 3.4 10.4 L5.2 9.2 A3.6 3.6 0 0 1 5.3 6.8 Z" fill="#fbbc05"/></svg><div style="left:44.4px;top:1585.0px;font-size:14.7px;line-height:20px;color:#23222a;width:169px;overflow:hidden;-webkit-mask-image:linear-gradient(to right,#000 149px,transparent 169px);">traefik cert manager ingress</div><svg style="position:absolute;left:20.6px;top:1628px;" width="16" height="16" viewBox="0 0 16 16"><g fill="none" stroke="#111" stroke-width="1.6" stroke-linejoin="round"><path d="M8 2.5 L13.5 5.5 L8 8.5 L2.5 5.5 Z"/><path d="M2.5 8.5 L8 11.5 L13.5 8.5"/><path d="M4 10.5 L8 13.5 L12 10.5"/></g></svg><div style="left:44.4px;top:1626.0px;font-size:14.7px;line-height:20px;color:#23222a;width:169px;overflow:hidden;-webkit-mask-image:linear-gradient(to right,#000 149px,transparent 169px);">Kubernetes - Traefik</div><svg style="position:absolute;left:20.6px;top:1669px;" width="16" height="16" viewBox="0 0 16 16"><g fill="none" stroke="#111" stroke-width="1.6" stroke-linejoin="round"><path d="M8 2.5 L13.5 5.5 L8 8.5 L2.5 5.5 Z"/><path d="M2.5 8.5 L8 11.5 L13.5 8.5"/><path d="M4 10.5 L8 13.5 L12 10.5"/></g></svg><div style="left:44.4px;top:1667.0px;font-size:14.7px;line-height:20px;color:#23222a;width:169px;overflow:hidden;-webkit-mask-image:linear-gradient(to right,#000 149px,transparent 169px);">Integration with cert-manager</div><svg style="position:absolute;left:20.6px;top:1710px;" width="16" height="16" viewBox="0 0 16 16"><g fill="none" stroke="#15141a" stroke-width="1.3"><circle cx="8" cy="8" r="6.8"/><ellipse cx="8" cy="8" rx="3" ry="6.8"/><path d="M1.2 8 H14.8"/></g></svg><div style="left:44.4px;top:1708.0px;font-size:14.7px;line-height:20px;color:#23222a;width:169px;overflow:hidden;-webkit-mask-image:linear-gradient(to right,#000 149px,transparent 169px);">docs.vultr.com/how-to-install</div><svg style="position:absolute;left:20.6px;top:1751px;" width="17" height="16" viewBox="0 0 17 16"><rect x="1" y="11" width="3" height="4" fill="#f58b4b"/><rect x="5" y="12" width="3" height="3" fill="#9ed0f5"/><rect x="10" y="11" width="3" height="4" fill="#f3c96b"/><rect x="13" y="1" width="3" height="4" fill="#f58b4b"/></svg><div style="left:19.6px;top:1749px;font-size:12.5px;line-height:18px;font-weight:700;color:#111;letter-spacing:-1px;">KB</div><div style="left:44.4px;top:1749.0px;font-size:14.7px;line-height:20px;color:#23222a;width:169px;overflow:hidden;-webkit-mask-image:linear-gradient(to right,#000 149px,transparent 169px);">Decommission a Specific Pod</div><svg style="position:absolute;left:20.6px;top:1792px;" width="16" height="16" viewBox="0 0 16 16"><circle cx="8" cy="8.5" r="6" fill="none" stroke="#f46800" stroke-width="3"/><circle cx="8" cy="8.5" r="2.2" fill="#fbb03b"/><path d="M8 1 L9.5 3 M13 3 L13.5 5.5 M2.5 4 L3.5 2.5" stroke="#f46800" stroke-width="2"/></svg><div style="left:44.4px;top:1790.0px;font-size:14.7px;line-height:20px;color:#23222a;width:169px;overflow:hidden;-webkit-mask-image:linear-gradient(to right,#000 149px,transparent 169px);">Kubernetes / Persistent Volumes</div><svg style="position:absolute;left:20.6px;top:1833px;" width="16" height="16" viewBox="0 0 16 16"><circle cx="8" cy="8" r="7" fill="none" stroke="#15141a" stroke-width="1.4"/><circle cx="8" cy="4.8" r="1" fill="#15141a"/><path d="M8 7 V12" stroke="#15141a" stroke-width="1.5"/></svg><div style="left:44.4px;top:1831.0px;font-size:14.7px;line-height:20px;color:#23222a;width:169px;overflow:hidden;-webkit-mask-image:linear-gradient(to right,#000 149px,transparent 169px);">Проблема при загрузке страницы</div><svg style="position:absolute;left:20.6px;top:1874px;" width="16" height="16" viewBox="0 0 16 16"><circle cx="8" cy="8.5" r="6" fill="none" stroke="#f46800" stroke-width="3"/><circle cx="8" cy="8.5" r="2.2" fill="#fbb03b"/><path d="M8 1 L9.5 3 M13 3 L13.5 5.5 M2.5 4 L3.5 2.5" stroke="#f46800" stroke-width="2"/></svg><div style="left:44.4px;top:1872.0px;font-size:14.7px;line-height:20px;color:#23222a;width:169px;overflow:hidden;-webkit-mask-image:linear-gradient(to right,#000 149px,transparent 169px);">Alert rules - Alerting - Grafana</div><svg style="position:absolute;left:20.6px;top:1915px;" width="17" height="16" viewBox="0 0 17 16"><rect x="1" y="11" width="3" height="4" fill="#f58b4b"/><rect x="5" y="12" width="3" height="3" fill="#9ed0f5"/><rect x="10" y="11" width="3" height="4" fill="#f3c96b"/><rect x="13" y="1" width="3" height="4" fill="#f58b4b"/></svg><div style="left:19.6px;top:1913px;font-size:12.5px;line-height:18px;font-weight:700;color:#111;letter-spacing:-1px;">KB</div><div style="left:44.4px;top:1913.0px;font-size:14.7px;line-height:20px;color:#23222a;width:169px;overflow:hidden;-webkit-mask-image:linear-gradient(to right,#000 149px,transparent 169px);">Setting Up a PostgreSQL Cluster</div><div style="left:13px;top:1948px;width:208px;height:32px;background:#fff;border-radius:6px;box-shadow:0 1px 2px rgba(0,0,0,.25);"></div><svg style="position:absolute;left:20.6px;top:1956px;" width="16" height="16" viewBox="0 0 16 16"><rect x="0" y="0" width="16" height="16" rx="1.5" fill="#6c3fd6"/><path d="M11.5 4.2 C10.5 3.3 9.3 3 8 3 C5.8 3 4.3 4.2 4.3 5.8 C4.3 9 11.7 7.5 11.7 10.5 C11.7 12.2 10 13 8 13 C6.3 13 5 12.4 4 11.5" fill="none" stroke="#fff" stroke-width="1.9"/></svg><div style="left:44.4px;top:1954.0px;font-size:14.7px;line-height:20px;color:#15141a;width:148px;overflow:hidden;-webkit-mask-image:linear-gradient(to right,#000 120px,transparent 148px);">RBAC Authorization | Managed</div><svg style="position:absolute;left:198px;top:1958px;" width="12" height="12" viewBox="0 0 12 12"><path d="M1.5 1.5 L10.5 10.5 M10.5 1.5 L1.5 10.5" stroke="#15141a" stroke-width="1.4"/></svg><svg style="position:absolute;left:21px;top:2001px;" width="15" height="15" viewBox="0 0 15 15"><path d="M7.5 1 V14 M1 7.5 H14" stroke="#15141a" stroke-width="1.3"/></svg><div style="left:44.4px;top:1998.0px;font-size:14.7px;line-height:20px;color:#15141a;">Новая вкладка</div><div style="left:13px;top:2033px;width:208px;height:1px;background:#c9c9cf;"></div><svg style="position:absolute;left:20.6px;top:2052px;" width="16" height="16" viewBox="0 0 16 16"><circle cx="8" cy="8" r="2.6" fill="none" stroke="#15141a" stroke-width="1.3"/><path d="M8 1 L9.3 2.8 L11.5 2.1 L11.8 4.3 L14 5 L13.3 7.2 L15 8.6 L13.3 10 L14 12.2 L11.8 12.8 L11.5 15 L9.3 14.3 L8 16 L6.7 14.3 L4.5 15 L4.2 12.8 L2 12.2 L2.7 10 L1 8.6 L2.7 7.2 L2 5 L4.2 4.3 L4.5 2.1 L6.7 2.8 Z" fill="none" stroke="#15141a" stroke-width="1.3" stroke-linejoin="round"/></svg><svg style="position:absolute;left:54px;top:2050px;" width="22" height="20" viewBox="0 0 22 20"><path d="M2 9 C2 4 6 2 10 2 C15 2 18 5 18 9 C18 13 14 16 9 16 L4 19 L5 15 C3 14 2 12 2 9 Z" fill="#fbd13a"/><circle cx="7.5" cy="8" r="1" fill="#6b3a00"/><circle cx="12" cy="8" r="1" fill="#6b3a00"/><path d="M6.5 11 C8.5 13 11.5 13 13 11 Z" fill="#c0392b"/><circle cx="19" cy="2.5" r="2.5" fill="#2b7de9"/></svg><svg style="position:absolute;left:89px;top:2051px;" width="18" height="18" viewBox="0 0 18 18"><rect x="3" y="1.5" width="9" height="7" rx="1.5" fill="none" stroke="#15141a" stroke-width="1.4"/><rect x="6" y="6" width="9" height="8" rx="1.5" fill="#ebebef" stroke="#15141a" stroke-width="1.4"/><path d="M1 15.5 H17" stroke="#15141a" stroke-width="2.2"/></svg><svg style="position:absolute;left:122px;top:2052px;" width="17" height="17" viewBox="0 0 17 17"><circle cx="8.5" cy="8.5" r="7.3" fill="none" stroke="#15141a" stroke-width="1.4"/><path d="M8.5 4 V8.5 L11.5 11" fill="none" stroke="#15141a" stroke-width="1.4"/></svg><svg style="position:absolute;left:156px;top:2051px;" width="18" height="17" viewBox="0 0 18 17"><path d="M9 1.5 L11.2 6.3 L16.5 6.8 L12.5 10.3 L13.7 15.5 L9 12.8 L4.3 15.5 L5.5 10.3 L1.5 6.8 L6.8 6.3 Z" fill="none" stroke="#15141a" stroke-width="1.3" stroke-linejoin="round"/></svg><div style="left:0px;top:0px;width:233px;height:14px;background:linear-gradient(rgba(0,0,0,.08),rgba(0,0,0,0));"></div></div><div style="left:233px;top:75px;width:2210px;height:2085px;background:#fff;"></div><div style="left:234px;top:135px;width:372px;height:2025px;background:#f5f6f8;"></div><div style="left:233px;top:75px;width:1px;height:2085px;background:#cfcfd6;"></div><div style="left:2427px;top:135px;width:16px;height:2025px;background:#f5f6f8;"></div><div style="left:233px;top:75px;width:2210px;height:60px;background:#fff;box-shadow:0 1px 3px rgba(20,40,60,.12);"></div><div style="left:249px;top:86px;font-size:31px;line-height:38px;font-weight:700;color:#0b2233;letter-spacing:0.6px;"><span style="background:linear-gradient(#e8304a 0,#e8304a 52%,#0b2233 52%);-webkit-background-clip:text;background-clip:text;color:transparent;">S</span>elec<span style="background:linear-gradient(#e8304a 0,#e8304a 58%,#0b2233 58%);-webkit-background-clip:text;background-clip:text;color:transparent;">t</span>el</div><div style="left:386px;top:85px;width:136px;height:40px;background:#edf0f3;border-radius:6px;"></div><div style="left:398.0px;top:94.0px;font-size:16.7px;line-height:22px;color:#203142;">Документация</div><div style="left:542.0px;top:94.0px;font-size:16.7px;line-height:22px;color:#203142;">API</div><div style="left:598.0px;top:94.0px;font-size:16.7px;line-height:22px;color:#203142;">Terraform</div><div style="left:1873.0px;top:94.0px;font-size:16.6px;line-height:22px;color:#203142;">Русский</div><svg style="position:absolute;left:1944px;top:100px;" width="14" height="9" viewBox="0 0 14 9"><path d="M1.5 1.5 L7 7 L12.5 1.5" fill="none" stroke="#203142" stroke-width="1.4"/></svg><div style="left:1975px;top:85px;width:80px;height:40px;background:#edf0f3;border-radius:6px;"></div><div style="left:1977px;top:87px;width:38px;height:36px;background:#fff;border-radius:5px;"></div><svg style="position:absolute;left:1986px;top:95px;" width="20" height="20" viewBox="0 0 20 20"><circle cx="10" cy="10" r="4.6" fill="none" stroke="#203142" stroke-width="1.8"/><path d="M10 1.5 V4 M10 16 V18.5 M1.5 10 H4 M16 10 H18.5 M4 4 L5.7 5.7 M14.3 14.3 L16 16 M16 4 L14.3 5.7 M5.7 14.3 L4 16" stroke="#203142" stroke-width="1.8"/></svg><svg style="position:absolute;left:2025px;top:95px;" width="20" height="20" viewBox="0 0 20 20"><path d="M8 2.5 A8 8 0 1 0 17.5 12 A6.5 6.5 0 0 1 8 2.5 Z" fill="none" stroke="#203142" stroke-width="1.6" stroke-linejoin="round"/></svg><div style="left:2071px;top:85px;width:100px;height:40px;background:#0b2233;border-radius:6px;"></div><div style="left:2087.0px;top:94.0px;font-size:17px;line-height:22px;color:#fff;">В панель</div><div style="left:2187px;top:85px;width:240px;height:40px;background:#fff;border:1px solid #c9cfd6;border-radius:6px;"></div><div style="left:2386px;top:86px;width:1px;height:38px;background:#c9cfd6;"></div><div style="left:2200.0px;top:95.0px;font-size:16.5px;line-height:22px;color:#a3acb5;">Поиск...</div><svg style="position:absolute;left:2396px;top:95px;" width="21" height="21" viewBox="0 0 21 21"><circle cx="9" cy="9" r="6.5" fill="none" stroke="#b5bcc4" stroke-width="1.5"/><path d="M13.8 13.8 L18.5 18.5" stroke="#b5bcc4" stroke-width="1.5"/></svg><div style="left:250.0px;top:199.0px;font-size:16.3px;line-height:24px;color:#203142;">Инфраструктура</div><svg style="position:absolute;left:590px;top:205px;" width="9" height="13" viewBox="0 0 9 13"><path d="M1.5 1.5 L7 6.5 L1.5 11.5" fill="none" stroke="#203142" stroke-width="1.3"/></svg><div style="left:250.0px;top:239.0px;font-size:16.3px;line-height:24px;color:#203142;">Аккаунт</div><svg style="position:absolute;left:590px;top:245px;" width="9" height="13" viewBox="0 0 9 13"><path d="M1.5 1.5 L7 6.5 L1.5 11.5" fill="none" stroke="#203142" stroke-width="1.3"/></svg><div style="left:250.0px;top:279.0px;font-size:16.3px;line-height:24px;color:#203142;">Биллинг</div><svg style="position:absolute;left:590px;top:285px;" width="9" height="13" viewBox="0 0 9 13"><path d="M1.5 1.5 L7 6.5 L1.5 11.5" fill="none" stroke="#203142" stroke-width="1.3"/></svg><div style="left:250.0px;top:319.0px;font-size:16.3px;line-height:24px;color:#203142;">Управление доступом (IAM)</div><svg style="position:absolute;left:590px;top:325px;" width="9" height="13" viewBox="0 0 9 13"><path d="M1.5 1.5 L7 6.5 L1.5 11.5" fill="none" stroke="#203142" stroke-width="1.3"/></svg><div style="left:234px;top:351px;width:3px;height:40px;background:#e5303f;"></div><div style="left:250.0px;top:359.0px;font-size:16.3px;line-height:24px;color:#203142;">Вычисления</div><svg style="position:absolute;left:588px;top:368px;" width="13" height="8" viewBox="0 0 13 8"><path d="M1 1.2 L6.5 6.5 L12 1.2" fill="none" stroke="#203142" stroke-width="1.3"/></svg><div style="left:261.8px;top:399.0px;font-size:16.3px;line-height:24px;color:#203142;">Выделенные серверы</div><svg style="position:absolute;left:574px;top:405px;" width="9" height="13" viewBox="0 0 9 13"><path d="M1.5 1.5 L7 6.5 L1.5 11.5" fill="none" stroke="#203142" stroke-width="1.3"/></svg><div style="left:261.8px;top:439.0px;font-size:16.3px;line-height:24px;color:#203142;">Облачные серверы</div><svg style="position:absolute;left:574px;top:445px;" width="9" height="13" viewBox="0 0 9 13"><path d="M1.5 1.5 L7 6.5 L1.5 11.5" fill="none" stroke="#203142" stroke-width="1.3"/></svg><div style="left:261.8px;top:479.0px;font-size:16.3px;line-height:24px;color:#203142;">Managed Kubernetes</div><svg style="position:absolute;left:572px;top:488px;" width="13" height="8" viewBox="0 0 13 8"><path d="M1 1.2 L6.5 6.5 L12 1.2" fill="none" stroke="#203142" stroke-width="1.3"/></svg><div style="left:274.2px;top:519.0px;font-size:16.3px;line-height:24px;color:#203142;">Общая информация</div><svg style="position:absolute;left:574px;top:525px;" width="9" height="13" viewBox="0 0 9 13"><path d="M1.5 1.5 L7 6.5 L1.5 11.5" fill="none" stroke="#203142" stroke-width="1.3"/></svg><div style="left:274.2px;top:559.0px;font-size:16.3px;line-height:24px;color:#203142;">Быстрый старт</div><div style="left:274.2px;top:599.0px;font-size:16.3px;line-height:24px;color:#203142;">Создать кластер</div><svg style="position:absolute;left:574px;top:605px;" width="9" height="13" viewBox="0 0 9 13"><path d="M1.5 1.5 L7 6.5 L1.5 11.5" fill="none" stroke="#203142" stroke-width="1.3"/></svg><div style="left:274.2px;top:639.0px;font-size:16.3px;line-height:24px;color:#203142;">Работа с кластером</div><svg style="position:absolute;left:572px;top:648px;" width="13" height="8" viewBox="0 0 13 8"><path d="M1 1.2 L6.5 6.5 L12 1.2" fill="none" stroke="#203142" stroke-width="1.3"/></svg><div style="left:286.0px;top:679.0px;font-size:16.3px;line-height:24px;color:#203142;">Подключиться к кластеру</div><div style="left:286.0px;top:719.0px;font-size:16.3px;line-height:24px;color:#203142;">Доступ к кластеру через OIDC-
провайдера</div><div style="left:234px;top:775px;width:370px;height:40px;background:#fff;"></div><div style="left:234px;top:775px;width:3px;height:40px;background:#e5303f;"></div><div style="left:286.0px;top:783.0px;font-size:16.3px;line-height:24px;color:#203142;">RBAC Authorization</div><div style="left:286.0px;top:823.0px;font-size:16.3px;line-height:24px;color:#203142;">Логи в кластере</div><div style="left:286.0px;top:863.0px;font-size:16.3px;line-height:24px;color:#203142;">Посмотреть статус кластера</div><div style="left:286.0px;top:903.0px;font-size:16.3px;line-height:24px;color:#203142;">Metrics Server</div><div style="left:286.0px;top:943.0px;font-size:16.3px;line-height:24px;color:#203142;">Обновить сертификаты для системных
компонентов</div><div style="left:286.0px;top:1007.0px;font-size:16.3px;line-height:24px;color:#203142;">Обновить версию Kubernetes</div><div style="left:286.0px;top:1047.0px;font-size:16.3px;line-height:24px;color:#203142;">Приложения</div><div style="left:286.0px;top:1087.0px;font-size:16.3px;line-height:24px;color:#203142;">Настроить интеграцию с Container
Registry</div><div style="left:286.0px;top:1151.0px;font-size:16.3px;line-height:24px;color:#203142;">Развернуть образ из Container Registry</div><div style="left:286.0px;top:1191.0px;font-size:16.3px;line-height:24px;color:#203142;">Подключить файловое хранилище к
кластеру в другом пуле</div><div style="left:286.0px;top:1255.0px;font-size:16.3px;line-height:24px;color:#203142;">Подключить файловое хранилище к
кластеру в одном пуле</div><div style="left:286.0px;top:1319.0px;font-size:16.3px;line-height:24px;color:#203142;">Настроить время начала обслуживания</div><div style="left:286.0px;top:1359.0px;font-size:16.3px;line-height:24px;color:#203142;">Feature Gates</div><div style="left:286.0px;top:1399.0px;font-size:16.3px;line-height:24px;color:#203142;">Admission Controllers</div><div style="left:286.0px;top:1439.0px;font-size:16.3px;line-height:24px;color:#203142;">Удалить кластер</div><div style="left:274.2px;top:1479.0px;font-size:16.3px;line-height:24px;color:#203142;">Работа с группами нод</div><svg style="position:absolute;left:574px;top:1485px;" width="9" height="13" viewBox="0 0 9 13"><path d="M1.5 1.5 L7 6.5 L1.5 11.5" fill="none" stroke="#203142" stroke-width="1.3"/></svg><div style="left:274.2px;top:1519.0px;font-size:16.3px;line-height:24px;color:#203142;">Работа с дисками</div><svg style="position:absolute;left:574px;top:1525px;" width="9" height="13" viewBox="0 0 9 13"><path d="M1.5 1.5 L7 6.5 L1.5 11.5" fill="none" stroke="#203142" stroke-width="1.3"/></svg><div style="left:274.2px;top:1559.0px;font-size:16.3px;line-height:24px;color:#203142;">Работа с сетью</div><svg style="position:absolute;left:574px;top:1565px;" width="9" height="13" viewBox="0 0 9 13"><path d="M1.5 1.5 L7 6.5 L1.5 11.5" fill="none" stroke="#203142" stroke-width="1.3"/></svg><div style="left:261.8px;top:1599.0px;font-size:16.3px;line-height:24px;color:#203142;">Облако на базе VMware</div><svg style="position:absolute;left:574px;top:1605px;" width="9" height="13" viewBox="0 0 9 13"><path d="M1.5 1.5 L7 6.5 L1.5 11.5" fill="none" stroke="#203142" stroke-width="1.3"/></svg><div style="left:261.8px;top:1639.0px;font-size:16.3px;line-height:24px;color:#203142;">Готовое облако 1С</div><svg style="position:absolute;left:574px;top:1645px;" width="9" height="13" viewBox="0 0 9 13"><path d="M1.5 1.5 L7 6.5 L1.5 11.5" fill="none" stroke="#203142" stroke-width="1.3"/></svg><div style="left:250.0px;top:1679.0px;font-size:16.3px;line-height:24px;color:#203142;">Хранение и обработка данных</div><svg style="position:absolute;left:590px;top:1685px;" width="9" height="13" viewBox="0 0 9 13"><path d="M1.5 1.5 L7 6.5 L1.5 11.5" fill="none" stroke="#203142" stroke-width="1.3"/></svg><div style="left:250.0px;top:1719.0px;font-size:16.3px;line-height:24px;color:#203142;">Услуги дата-центров</div><svg style="position:absolute;left:590px;top:1725px;" width="9" height="13" viewBox="0 0 9 13"><path d="M1.5 1.5 L7 6.5 L1.5 11.5" fill="none" stroke="#203142" stroke-width="1.3"/></svg><div style="left:250.0px;top:1759.0px;font-size:16.3px;line-height:24px;color:#203142;">Внешние сетевые сервисы</div><svg style="position:absolute;left:590px;top:1765px;" width="9" height="13" viewBox="0 0 9 13"><path d="M1.5 1.5 L7 6.5 L1.5 11.5" fill="none" stroke="#203142" stroke-width="1.3"/></svg><div style="left:250.0px;top:1799.0px;font-size:16.3px;line-height:24px;color:#203142;">Глобальная сетевая связность</div><svg style="position:absolute;left:590px;top:1805px;" width="9" height="13" viewBox="0 0 9 13"><path d="M1.5 1.5 L7 6.5 L1.5 11.5" fill="none" stroke="#203142" stroke-width="1.3"/></svg><div style="left:250.0px;top:1839.0px;font-size:16.3px;line-height:24px;color:#203142;">Резервное копирование и восстановление</div><svg style="position:absolute;left:590px;top:1845px;" width="9" height="13" viewBox="0 0 9 13"><path d="M1.5 1.5 L7 6.5 L1.5 11.5" fill="none" stroke="#203142" stroke-width="1.3"/></svg><div style="left:250.0px;top:1879.0px;font-size:16.3px;line-height:24px;color:#203142;">AI-платформа</div><svg style="position:absolute;left:590px;top:1885px;" width="9" height="13" viewBox="0 0 9 13"><path d="M1.5 1.5 L7 6.5 L1.5 11.5" fill="none" stroke="#203142" stroke-width="1.3"/></svg><div style="left:250.0px;top:1919.0px;font-size:16.3px;line-height:24px;color:#203142;">Мониторинг и логи</div><svg style="position:absolute;left:590px;top:1925px;" width="9" height="13" viewBox="0 0 9 13"><path d="M1.5 1.5 L7 6.5 L1.5 11.5" fill="none" stroke="#203142" stroke-width="1.3"/></svg><div style="left:250.0px;top:1959.0px;font-size:16.3px;line-height:24px;color:#203142;">Безопасность</div><svg style="position:absolute;left:590px;top:1965px;" width="9" height="13" viewBox="0 0 9 13"><path d="M1.5 1.5 L7 6.5 L1.5 11.5" fill="none" stroke="#203142" stroke-width="1.3"/></svg><div style="left:250.0px;top:1999.0px;font-size:16.3px;line-height:24px;color:#203142;">Аттестация и сертификация</div><svg style="position:absolute;left:590px;top:2005px;" width="9" height="13" viewBox="0 0 9 13"><path d="M1.5 1.5 L7 6.5 L1.5 11.5" fill="none" stroke="#203142" stroke-width="1.3"/></svg><div style="left:250.0px;top:2039.0px;font-size:16.3px;line-height:24px;color:#203142;">Дополнительные услуги</div><svg style="position:absolute;left:590px;top:2045px;" width="9" height="13" viewBox="0 0 9 13"><path d="M1.5 1.5 L7 6.5 L1.5 11.5" fill="none" stroke="#203142" stroke-width="1.3"/></svg><div style="left:991px;top:135px;width:808px;height:1106px;background:#f6f7f9;border:1px solid #e4e7eb;border-top:none;border-radius:0 0 6px 6px;"></div><div class="fl" style="left:992px;top:135px;width:806px;height:1105px;"><div style="left:24.0px;top:-1.5px;font-size:15.87px;line-height:28px;color:#1c2b39;font-family:'Liberation Mono', monospace;">- <span style="color:#1f9bd0">kind</span>: ServiceAccount</div><div style="left:24.0px;top:26.5px;font-size:15.87px;line-height:28px;color:#1c2b39;font-family:'Liberation Mono', monospace;">    <span style="color:#1f9bd0">name</span>: test-sa-two</div><div style="left:24.0px;top:54.5px;font-size:15.87px;line-height:28px;color:#1c2b39;font-family:'Liberation Mono', monospace;">    <span style="color:#1f9bd0">apiGroup</span>: <span style="color:#d6336c">""</span></div><div style="left:24.0px;top:82.5px;font-size:15.87px;line-height:28px;color:#1c2b39;font-family:'Liberation Mono', monospace;"><span style="color:#1f9bd0">roleRef</span>:</div><div style="left:24.0px;top:110.5px;font-size:15.87px;line-height:28px;color:#1c2b39;font-family:'Liberation Mono', monospace;">    <span style="color:#1f9bd0">kind</span>: Role</div><div style="left:24.0px;top:138.5px;font-size:15.87px;line-height:28px;color:#1c2b39;font-family:'Liberation Mono', monospace;">    <span style="color:#1f9bd0">name</span>: pod-reader-two</div><div style="left:24.0px;top:166.5px;font-size:15.87px;line-height:28px;color:#1c2b39;font-family:'Liberation Mono', monospace;">    <span style="color:#1f9bd0">apiGroup</span>: rbac.authorization.k8s.io</div><div style="left:24.0px;top:194.5px;font-size:15.87px;line-height:28px;color:#1c2b39;font-family:'Liberation Mono', monospace;">---</div><div style="left:24.0px;top:222.5px;font-size:15.87px;line-height:28px;color:#1c2b39;font-family:'Liberation Mono', monospace;"><span style="color:#1f9bd0">apiVersion</span>: rbac.authorization.k8s.io/v1</div><div style="left:24.0px;top:250.5px;font-size:15.87px;line-height:28px;color:#1c2b39;font-family:'Liberation Mono', monospace;"><span style="color:#1f9bd0">kind</span>: Role</div><div style="left:24.0px;top:278.5px;font-size:15.87px;line-height:28px;color:#1c2b39;font-family:'Liberation Mono', monospace;"><span style="color:#1f9bd0">metadata</span>:</div><div style="left:24.0px;top:306.5px;font-size:15.87px;line-height:28px;color:#1c2b39;font-family:'Liberation Mono', monospace;">    <span style="color:#1f9bd0">namespace</span>: test-one</div><div style="left:24.0px;top:334.5px;font-size:15.87px;line-height:28px;color:#1c2b39;font-family:'Liberation Mono', monospace;">    <span style="color:#1f9bd0">name</span>: pod-reader-one</div><div style="left:24.0px;top:362.5px;font-size:15.87px;line-height:28px;color:#1c2b39;font-family:'Liberation Mono', monospace;"><span style="color:#1f9bd0">rules</span>:</div><div style="left:24.0px;top:390.5px;font-size:15.87px;line-height:28px;color:#1c2b39;font-family:'Liberation Mono', monospace;">- <span style="color:#1f9bd0">apiGroups</span>: [<span style="color:#d6336c">""</span>] <span style="color:#8a96a3;font-style:italic"># "" indicates the core API group</span></div><div style="left:24.0px;top:418.5px;font-size:15.87px;line-height:28px;color:#1c2b39;font-family:'Liberation Mono', monospace;">    <span style="color:#1f9bd0">resources</span>: [<span style="color:#d6336c">"pods"</span>]</div><div style="left:24.0px;top:446.5px;font-size:15.87px;line-height:28px;color:#1c2b39;font-family:'Liberation Mono', monospace;">    <span style="color:#1f9bd0">verbs</span>: [<span style="color:#d6336c">"get"</span>, <span style="color:#d6336c">"watch"</span>, <span style="color:#d6336c">"list"</span>]</div><div style="left:24.0px;top:474.5px;font-size:15.87px;line-height:28px;color:#1c2b39;font-family:'Liberation Mono', monospace;">---</div><div style="left:24.0px;top:502.5px;font-size:15.87px;line-height:28px;color:#1c2b39;font-family:'Liberation Mono', monospace;"><span style="color:#1f9bd0">apiVersion</span>: rbac.authorization.k8s.io/v1</div><div style="left:24.0px;top:530.5px;font-size:15.87px;line-height:28px;color:#1c2b39;font-family:'Liberation Mono', monospace;"><span style="color:#1f9bd0">kind</span>: Role</div><div style="left:24.0px;top:558.5px;font-size:15.87px;line-height:28px;color:#1c2b39;font-family:'Liberation Mono', monospace;"><span style="color:#1f9bd0">metadata</span>:</div><div style="left:24.0px;top:586.5px;font-size:15.87px;line-height:28px;color:#1c2b39;font-family:'Liberation Mono', monospace;">    <span style="color:#1f9bd0">namespace</span>: test-two</div><div style="left:24.0px;top:614.5px;font-size:15.87px;line-height:28px;color:#1c2b39;font-family:'Liberation Mono', monospace;">    <span style="color:#1f9bd0">name</span>: pod-reader-two</div><div style="left:24.0px;top:642.5px;font-size:15.87px;line-height:28px;color:#1c2b39;font-family:'Liberation Mono', monospace;"><span style="color:#1f9bd0">rules</span>:</div><div style="left:24.0px;top:670.5px;font-size:15.87px;line-height:28px;color:#1c2b39;font-family:'Liberation Mono', monospace;">- <span style="color:#1f9bd0">apiGroups</span>: [<span style="color:#d6336c">""</span>] <span style="color:#8a96a3;font-style:italic"># "" indicates the core API group</span></div><div style="left:24.0px;top:698.5px;font-size:15.87px;line-height:28px;color:#1c2b39;font-family:'Liberation Mono', monospace;">    <span style="color:#1f9bd0">resources</span>: [<span style="color:#d6336c">"pods"</span>]</div><div style="left:24.0px;top:726.5px;font-size:15.87px;line-height:28px;color:#1c2b39;font-family:'Liberation Mono', monospace;">    <span style="color:#1f9bd0">verbs</span>: [<span style="color:#d6336c">"get"</span>, <span style="color:#d6336c">"watch"</span>, <span style="color:#d6336c">"list"</span>]</div><div style="left:24.0px;top:754.5px;font-size:15.87px;line-height:28px;color:#1c2b39;font-family:'Liberation Mono', monospace;">---</div><div style="left:24.0px;top:782.5px;font-size:15.87px;line-height:28px;color:#1c2b39;font-family:'Liberation Mono', monospace;"><span style="color:#1f9bd0">apiVersion</span>: v1</div><div style="left:24.0px;top:810.5px;font-size:15.87px;line-height:28px;color:#1c2b39;font-family:'Liberation Mono', monospace;"><span style="color:#1f9bd0">kind</span>: ServiceAccount</div><div style="left:24.0px;top:838.5px;font-size:15.87px;line-height:28px;color:#1c2b39;font-family:'Liberation Mono', monospace;"><span style="color:#1f9bd0">metadata</span>:</div><div style="left:24.0px;top:866.5px;font-size:15.87px;line-height:28px;color:#1c2b39;font-family:'Liberation Mono', monospace;">    <span style="color:#1f9bd0">namespace</span>: test-one</div><div style="left:24.0px;top:894.5px;font-size:15.87px;line-height:28px;color:#1c2b39;font-family:'Liberation Mono', monospace;">    <span style="color:#1f9bd0">name</span>: test-sa-one</div><div style="left:24.0px;top:922.5px;font-size:15.87px;line-height:28px;color:#1c2b39;font-family:'Liberation Mono', monospace;">---</div><div style="left:24.0px;top:950.5px;font-size:15.87px;line-height:28px;color:#1c2b39;font-family:'Liberation Mono', monospace;"><span style="color:#1f9bd0">apiVersion</span>: v1</div><div style="left:24.0px;top:978.5px;font-size:15.87px;line-height:28px;color:#1c2b39;font-family:'Liberation Mono', monospace;"><span style="color:#1f9bd0">kind</span>: ServiceAccount</div><div style="left:24.0px;top:1006.5px;font-size:15.87px;line-height:28px;color:#1c2b39;font-family:'Liberation Mono', monospace;"><span style="color:#1f9bd0">metadata</span>:</div><div style="left:24.0px;top:1034.5px;font-size:15.87px;line-height:28px;color:#1c2b39;font-family:'Liberation Mono', monospace;">    <span style="color:#1f9bd0">namespace</span>: test-two</div><div style="left:24.0px;top:1062.5px;font-size:15.87px;line-height:28px;color:#1c2b39;font-family:'Liberation Mono', monospace;">    <span style="color:#1f9bd0">name</span>: test-sa-two</div></div><div style="left:973.8px;top:1259.5px;font-size:16.15px;line-height:24px;color:#203142;">3. Запустите манифест.</div><div style="left:973.8px;top:1301.5px;font-size:16.15px;line-height:24px;color:#203142;">4. Создайте токены:</div><div style="left:991px;top:1342px;width:808px;height:173px;background:#f6f7f9;border:1px solid #e4e7eb;border-radius:6px;"></div><div class="fl" style="left:992px;top:1342px;width:806px;height:172px;"><div style="left:24.0px;top:17.0px;font-size:15.87px;line-height:28px;color:#1c2b39;font-family:'Liberation Mono', monospace;">kubectl get secret <span style="color:#3ba99e">$(kubectl get serviceaccount test-sa-one -o jsonpath</span>=<span style="color:#d6336c">'{.secrets[0].name}')</span></div><div style="left:24.0px;top:45.0px;font-size:15.87px;line-height:28px;color:#1c2b39;font-family:'Liberation Mono', monospace;">&lt;long and secure token <span style="color:#1d1db0">for</span> test-sa-one&gt;</div><div style="left:24.0px;top:101.0px;font-size:15.87px;line-height:28px;color:#1c2b39;font-family:'Liberation Mono', monospace;">kubectl get secret <span style="color:#3ba99e">$(kubectl get serviceaccount test-sa-two -o jsonpath</span>=<span style="color:#d6336c">'{.secrets[0].name}')</span></div><div style="left:24.0px;top:129.0px;font-size:15.87px;line-height:28px;color:#1c2b39;font-family:'Liberation Mono', monospace;">&lt;long and secure token <span style="color:#1d1db0">for</span> test-sa-two&gt;</div></div><div style="left:973.8px;top:1534.0px;font-size:16.15px;line-height:24px;color:#203142;">5. Вручную добавьте токены пользователям в файле <span style="font-family:'Liberation Mono',monospace;font-size:15.5px;background:#f1f3f5;border-radius:4px;padding:2px 3px;">kubeconfig.yaml</span> для авторизации без пароля:</div><div style="left:991px;top:1576px;width:808px;height:283px;background:#f6f7f9;border:1px solid #e4e7eb;border-radius:6px;"></div><div class="fl" style="left:992px;top:1576px;width:806px;height:282px;"><div style="left:24.0px;top:16.5px;font-size:15.87px;line-height:28px;color:#1c2b39;font-family:'Liberation Mono', monospace;"><span style="color:#1f9bd0">users</span>:</div><div style="left:24.0px;top:44.5px;font-size:15.87px;line-height:28px;color:#1c2b39;font-family:'Liberation Mono', monospace;">...</div><div style="left:24.0px;top:72.5px;font-size:15.87px;line-height:28px;color:#1c2b39;font-family:'Liberation Mono', monospace;">- <span style="color:#1f9bd0">name</span>: test-sa-one</div><div style="left:24.0px;top:100.5px;font-size:15.87px;line-height:28px;color:#1c2b39;font-family:'Liberation Mono', monospace;">  <span style="color:#1f9bd0">user</span>:</div><div style="left:24.0px;top:128.5px;font-size:15.87px;line-height:28px;color:#1c2b39;font-family:'Liberation Mono', monospace;">    <span style="color:#1f9bd0">token</span>: long and secure token test-sa-one</div><div style="left:24.0px;top:156.5px;font-size:15.87px;line-height:28px;color:#1c2b39;font-family:'Liberation Mono', monospace;">- <span style="color:#1f9bd0">name</span>: test-sa-two</div><div style="left:24.0px;top:184.5px;font-size:15.87px;line-height:28px;color:#1c2b39;font-family:'Liberation Mono', monospace;">  <span style="color:#1f9bd0">user</span>:</div><div style="left:24.0px;top:212.5px;font-size:15.87px;line-height:28px;color:#1c2b39;font-family:'Liberation Mono', monospace;">    <span style="color:#1f9bd0">token</span>: long and secure token test-sa-two</div><div style="left:24.0px;top:240.5px;font-size:15.87px;line-height:28px;color:#1c2b39;font-family:'Liberation Mono', monospace;">...</div></div><div style="left:973.8px;top:1877.0px;font-size:16.15px;line-height:24px;color:#203142;">6. Проверьте работу распределения ролей:</div><div style="left:991px;top:1919px;width:808px;height:281px;background:#f6f7f9;border:1px solid #e4e7eb;border-radius:6px;"></div><div class="fl" style="left:992px;top:1919px;width:806px;height:280px;"><div style="left:24.0px;top:17.3px;font-size:15.87px;line-height:28px;color:#1c2b39;font-family:'Liberation Mono', monospace;">kubectl config set-context <span style="color:#3ba99e">--current</span> <span style="color:#3ba99e">--user</span>=test-sa-two</div><div style="left:24.0px;top:45.3px;font-size:15.87px;line-height:28px;color:#1c2b39;font-family:'Liberation Mono', monospace;">Context <span style="color:#d6336c">"admin@kubernetes"</span> modified.</div><div style="left:24.0px;top:101.3px;font-size:15.87px;line-height:28px;color:#1c2b39;font-family:'Liberation Mono', monospace;">kubectl get pods <span style="color:#3ba99e">--namespace</span> test-two</div><div style="left:24.0px;top:129.3px;font-size:15.87px;line-height:28px;color:#1c2b39;font-family:'Liberation Mono', monospace;">No resources found <span style="color:#1d1db0">in</span> test-two namespace.</div><div style="left:24.0px;top:185.3px;font-size:15.87px;line-height:28px;color:#1c2b39;font-family:'Liberation Mono', monospace;">kubectl get pods <span style="color:#3ba99e">--namespace</span> test-one</div><div style="left:24.0px;top:213.3px;font-size:15.87px;line-height:28px;color:#1c2b39;font-family:'Liberation Mono', monospace;">Error from server (Forbidden): pods is forbidden: User <span style="color:#d6336c">"system:serviceaccount:test-one:test-sa-two"</span></div></div><div style="left:2167px;top:199px;width:3px;height:56px;background:#e5303f;border-radius:2px;"></div><div style="left:2186.0px;top:208.5px;font-size:14.35px;line-height:20px;color:#203142;">Распределить роли</div><div style="left:2186.0px;top:228.5px;font-size:14.35px;line-height:20px;color:#203142;">пользователей</div><div style="left:2374px;top:2091px;width:48px;height:48px;background:#ebedf0;border-radius:50%;"></div><svg style="position:absolute;left:2389px;top:2108px;" width="18" height="11" viewBox="0 0 18 11"><path d="M2 9 L9 2 L16 9" fill="none" stroke="#55606b" stroke-width="2"/></svg><div style="left:2443px;top:35px;width:1397px;height:29px;background:#f1f1f1;"></div><svg style="position:absolute;left:3810px;top:42px;" width="16" height="16" viewBox="0 0 16 16"><path d="M2 2 L14 14 M14 2 L2 14" stroke="#9a9a9a" stroke-width="1.3"/></svg><div style="left:2443px;top:64px;width:86px;height:2096px;background:#293a4c;"></div><div style="left:2443px;top:276px;width:86px;height:74px;background:#19212b;"></div><svg style="position:absolute;left:2474px;top:88px;" width="24" height="17" viewBox="0 0 24 17"><path d="M1 1.5 H23 M1 8.5 H23 M1 15.5 H23" stroke="#8595a5" stroke-width="2"/></svg><svg style="position:absolute;left:2469px;top:140px;" width="34" height="32" viewBox="0 0 34 32"><path d="M14 2 C6.5 2 1.5 6.5 1.5 12 C1.5 15.5 3.5 18 6 19.5 L4.5 23.5 L10 21.2 C11.3 21.6 12.6 21.8 14 21.8 C21.5 21.8 26.5 17.5 26.5 12 C26.5 6.5 21.5 2 14 2 Z" fill="#8595a5"/><path d="M29 13 C31.5 14.5 32.5 16.5 32.5 18.5 C32.5 21 31 23 29 24 L30 28 L25.5 25.5 C24.5 25.7 23.6 25.8 22.7 25.8 C20 25.8 17.8 25 16.2 23.5 C24 23 29.5 19 29 13 Z" fill="#8595a5"/></svg><div style="left:2490px;top:137px;width:20px;height:20px;background:#5eb5f7;border-radius:50%;border:0;"></div><div style="left:2500.0px;top:139.0px;font-size:13px;line-height:16px;color:#fff;-webkit-text-stroke:0.45px currentColor;transform:translateX(-50%);">7</div><div style="left:2485.5px;top:178.5px;font-size:13.8px;line-height:16px;color:#8595a5;-webkit-text-stroke:0.45px currentColor;transform:translateX(-50%);">All chats</div><svg style="position:absolute;left:2470px;top:216px;" width="30" height="30" viewBox="0 0 30 30"><circle cx="15" cy="15" r="14.5" fill="#8595a5"/><circle cx="15" cy="11.5" r="5" fill="#293a4c"/><path d="M5.5 23.5 C8 18.5 22 18.5 24.5 23.5 C22 26.5 18.5 28 15 28 C11.5 28 8 26.5 5.5 23.5 Z" fill="#293a4c"/></svg><div style="left:2485.5px;top:252.5px;font-size:13.8px;line-height:16px;color:#8595a5;-webkit-text-stroke:0.45px currentColor;transform:translateX(-50%);">Личные</div><svg style="position:absolute;left:2471px;top:292px;" width="30" height="24" viewBox="0 0 30 24"><path d="M2 4 C2 2.5 3 1.5 4.5 1.5 H11 L15 5.5 H25 C26.5 5.5 27.5 6.5 27.5 8 V19.5 C27.5 21 26.5 22 25 22 H4.5 C3 22 2 21 2 19.5 Z" fill="#5eb5f7"/></svg><div style="left:2490px;top:285px;width:20px;height:20px;background:#5eb5f7;border-radius:50%;box-shadow:0 0 0 2px #19212b;"></div><div style="left:2500.0px;top:287.0px;font-size:13px;line-height:16px;color:#fff;-webkit-text-stroke:0.45px currentColor;transform:translateX(-50%);">3</div><div style="left:2485.5px;top:326.5px;font-size:13.8px;line-height:16px;color:#5eb5f7;-webkit-text-stroke:0.45px currentColor;transform:translateX(-50%);">Каналы</div><svg style="position:absolute;left:2471px;top:366px;" width="30" height="24" viewBox="0 0 30 24"><path d="M2 4 C2 2.5 3 1.5 4.5 1.5 H11 L15 5.5 H25 C26.5 5.5 27.5 6.5 27.5 8 V19.5 C27.5 21 26.5 22 25 22 H4.5 C3 22 2 21 2 19.5 Z" fill="#8595a5"/></svg><div style="left:2485.5px;top:400.0px;font-size:13.8px;line-height:16px;color:#8595a5;-webkit-text-stroke:0.45px currentColor;transform:translateX(-50%);">Мемесы</div><svg style="position:absolute;left:2471px;top:440px;" width="30" height="24" viewBox="0 0 30 24"><path d="M2 4 C2 2.5 3 1.5 4.5 1.5 H11 L15 5.5 H25 C26.5 5.5 27.5 6.5 27.5 8 V19.5 C27.5 21 26.5 22 25 22 H4.5 C3 22 2 21 2 19.5 Z" fill="#8595a5"/></svg><div style="left:2485.5px;top:474.0px;font-size:13.8px;line-height:16px;color:#8595a5;-webkit-text-stroke:0.45px currentColor;transform:translateX(-50%);">Работаем!</div><svg style="position:absolute;left:2472px;top:516px;" width="28" height="24" viewBox="0 0 28 24"><path d="M2 5.5 H19" stroke="#8595a5" stroke-width="2"/><circle cx="23" cy="5.5" r="3.2" fill="none" stroke="#8595a5" stroke-width="2"/><path d="M9 18.5 H26" stroke="#8595a5" stroke-width="2"/><circle cx="5" cy="18.5" r="3.2" fill="none" stroke="#8595a5" stroke-width="2"/></svg><div style="left:2485.5px;top:548.0px;font-size:13.8px;line-height:16px;color:#8595a5;-webkit-text-stroke:0.45px currentColor;transform:translateX(-50%);">Edit</div><div style="left:2529px;top:64px;width:79px;height:2096px;background:#fff;"></div><div style="left:2607px;top:64px;width:1px;height:65px;background:#e7e7e7;"></div><svg style="position:absolute;left:2558px;top:86px;" width="22" height="22" viewBox="0 0 22 22"><circle cx="8.5" cy="8.5" r="6.8" fill="none" stroke="#999" stroke-width="1.7"/><path d="M13.5 13.5 L19.5 19.5" stroke="#999" stroke-width="1.9" stroke-linecap="round"/></svg><div style="left:2529px;top:129px;width:79px;height:74px;background:#419fd9;"></div><svg style="position:absolute;left:2541.1px;top:138.5px;" width="55.0" height="55.0" viewBox="0 0 55.0 55.0"><defs><clipPath id="c2568_166"><circle cx="27.5" cy="27.5" r="27.5"/></clipPath></defs><g clip-path="url(#c2568_166)"><rect width="55.0" height="55.0" fill="#4a86d8"/><rect y="32.0" width="55.0" height="23.0" fill="#6aaa3a"/><ellipse cx="19.0" cy="23.0" rx="12.0" ry="12.0" fill="#d9b49a"/><path d="M6.0 16.0 Q19.0 1.0 32.0 15.0 Z" fill="#e23030"/><rect x="5.0" y="14.0" width="28.0" height="5.0" rx="2.0" fill="#f3f3f3"/><path d="M32.0 4.0 L38.0 18.0 L44.0 2.0 L52.0 14.0 L55.0 6.0 L55.0 0 L30.0 0 Z" fill="#d82c2c"/><circle cx="40.0" cy="18.0" r="3.0" fill="#fff"/><circle cx="45.0" cy="20.0" r="2.5" fill="#fff"/><path d="M20.0 55.0 Q14.0 38.0 26.0 34.0 Q36.0 32.0 38.0 55.0 Z" fill="#c83a8a"/><circle cx="26.0" cy="46.0" r="6.0" fill="#3ab0a0"/><path d="M18.0 40.0 Q28.0 26.0 40.0 36.0 L42.0 55.0 L36.0 55.0 Z" fill="#e02828"/><rect x="16.0" y="38.0" width="24.0" height="5.0" rx="2.0" fill="#f5f5f5" transform="rotate(-15 28.0 40.0)"/><path d="M42.0 16.0 L55.0 12.0 L55.0 50.0 L40.0 55.0 Z" fill="#e8ecd8"/><path d="M44.0 24.0 L53.0 22.0 M44.0 32.0 L54.0 30.0 M43.0 40.0 L54.0 38.0" stroke="#d06060" stroke-width="2.0"/></g></svg><svg style="position:absolute;left:2541.1px;top:212.5px;" width="55.0" height="55.0" viewBox="0 0 55.0 55.0"><defs><clipPath id="c2568_240"><circle cx="27.5" cy="27.5" r="27.5"/></clipPath></defs><g clip-path="url(#c2568_240)"><defs><linearGradient id="av2" x1="0" y1="0" x2="0" y2="1"><stop offset="0" stop-color="#5e9fbf"/><stop offset=".45" stop-color="#cfe3ea"/><stop offset=".7" stop-color="#e8eef0"/><stop offset="1" stop-color="#f29a88"/></linearGradient></defs><rect width="55" height="55" fill="url(#av2)"/><path d="M5 30 V22 M10 34 V16 M15 30 V20 M20 36 V12 M25 32 V18 M30 36 V14 M35 30 V20 M40 34 V16 M45 30 V22 M50 32 V20" stroke="#a9cad8" stroke-width="2"/></g></svg><svg style="position:absolute;left:2541.1px;top:286.5px;" width="55.0" height="55.0" viewBox="0 0 55.0 55.0"><defs><clipPath id="c2568_314"><circle cx="27.5" cy="27.5" r="27.5"/></clipPath></defs><g clip-path="url(#c2568_314)"><rect width="55" height="55" fill="#fff"/><path d="M14 48 C6 40 6 18 16 10 C26 3 42 6 46 18 C50 30 48 44 40 50" fill="none" stroke="#222" stroke-width="1.5"/><ellipse cx="20" cy="24" rx="5" ry="4" fill="none" stroke="#222" stroke-width="1.4"/><ellipse cx="34" cy="19" rx="6" ry="5" fill="none" stroke="#222" stroke-width="1.4"/><circle cx="20" cy="25" r="1.6" fill="#222"/><circle cx="36" cy="18" r="1.6" fill="#222"/><path d="M26 38 Q30 42 34 38" fill="none" stroke="#222" stroke-width="1.4"/></g></svg><svg style="position:absolute;left:2541.1px;top:360.5px;" width="55.0" height="55.0" viewBox="0 0 55.0 55.0"><defs><clipPath id="c2568_388"><circle cx="27.5" cy="27.5" r="27.5"/></clipPath></defs><g clip-path="url(#c2568_388)"><rect width="55" height="55" fill="#d2305d"/><rect x="14" y="12" width="27" height="21" fill="#2f3e4d"/><rect x="17" y="15" width="21" height="13" fill="#7fe36b"/><rect x="16" y="34" width="23" height="10" fill="#3d4c5b"/><rect x="18" y="36" width="5" height="5" fill="#ffd44a"/><rect x="30" y="36" width="5" height="5" fill="#ffd44a"/></g></svg><svg style="position:absolute;left:2541.1px;top:434.5px;" width="55.0" height="55.0" viewBox="0 0 55.0 55.0"><defs><clipPath id="c2568_462"><circle cx="27.5" cy="27.5" r="27.5"/></clipPath></defs><g clip-path="url(#c2568_462)"><defs><radialGradient id="av5" cx=".5" cy=".5" r=".6"><stop offset="0" stop-color="#7a4be0"/><stop offset=".35" stop-color="#3fc3e8"/><stop offset=".6" stop-color="#c77b2a"/><stop offset="1" stop-color="#5a3414"/></radialGradient></defs><rect width="55" height="55" fill="url(#av5)"/><path d="M27 12 L40 22 L36 40 L20 42 L14 24 Z" fill="none" stroke="#f3c260" stroke-width="3"/></g></svg><svg style="position:absolute;left:2541.1px;top:508.5px;" width="55.0" height="55.0" viewBox="0 0 55.0 55.0"><defs><clipPath id="c2568_536"><circle cx="27.5" cy="27.5" r="27.5"/></clipPath></defs><g clip-path="url(#c2568_536)"><rect width="55" height="55" fill="#1f1f22"/><path d="M27.5 9 L35 22 H20 Z" fill="#ff8a65"/><rect x="11" y="27" width="14" height="14" rx="3" fill="#b26cf0"/><circle cx="37" cy="34" r="7.5" fill="#3fd6a0"/></g></svg><svg style="position:absolute;left:2541.1px;top:582.5px;" width="55.0" height="55.0" viewBox="0 0 55.0 55.0"><defs><clipPath id="c2568_610"><circle cx="27.5" cy="27.5" r="27.5"/></clipPath></defs><g clip-path="url(#c2568_610)"><defs><radialGradient id="av7" cx=".5" cy=".5" r=".55"><stop offset="0" stop-color="#e0f6ff"/><stop offset=".3" stop-color="#2fb5e8"/><stop offset=".55" stop-color="#1a4f7a"/><stop offset=".75" stop-color="#b88438"/><stop offset="1" stop-color="#4a2e16"/></radialGradient></defs><rect width="55" height="55" fill="url(#av7)"/></g></svg><svg style="position:absolute;left:2541.1px;top:656.5px;" width="55.0" height="55.0" viewBox="0 0 55.0 55.0"><defs><clipPath id="c2568_684"><circle cx="27.5" cy="27.5" r="27.5"/></clipPath></defs><g clip-path="url(#c2568_684)"><defs><linearGradient id="av8" x1="0" y1="0" x2="0" y2="1"><stop offset="0" stop-color="#f4a774"/><stop offset=".5" stop-color="#c77fb8"/><stop offset="1" stop-color="#29b0d8"/></linearGradient></defs><rect width="55" height="55" fill="url(#av8)"/><circle cx="27.5" cy="20" r="8" fill="#f6c23e"/><rect x="16" y="30" width="23" height="14" rx="2" fill="#9aa5b1"/><rect x="12" y="42" width="31" height="4" fill="#3b6cd6"/></g></svg><svg style="position:absolute;left:2541.1px;top:730.5px;" width="55.0" height="55.0" viewBox="0 0 55.0 55.0"><defs><clipPath id="c2568_758"><circle cx="27.5" cy="27.5" r="27.5"/></clipPath></defs><g clip-path="url(#c2568_758)"><rect width="55" height="55" fill="#f4f4ef"/><path d="M8 18 H46 M6 28 H50 M9 38 H45" stroke="#2d3a2d" stroke-width="4" stroke-dasharray="4 2"/><path d="M10 12 H44 M10 46 H44" stroke="#6aa05a" stroke-width="2" stroke-dasharray="3 3"/></g></svg><div style="left:2551px;top:229px;width:0px;height:0px;background:transparent;"></div><div style="left:2567px;top:245px;width:30px;height:22px;background:#bbbbbb;border-radius:11px;box-shadow:0 0 0 2px #fff;"></div><div style="left:2582.0px;top:248.0px;font-size:13.5px;line-height:16px;color:#fff;font-weight:700;transform:translateX(-50%);">40</div><div style="left:2573px;top:320px;width:22px;height:22px;background:#bbbbbb;border-radius:11px;box-shadow:0 0 0 2px #fff;"></div><div style="left:2584.0px;top:323.0px;font-size:13.5px;line-height:16px;color:#fff;font-weight:700;transform:translateX(-50%);">1</div><div style="left:2559px;top:468px;width:37px;height:22px;background:#bbbbbb;border-radius:11px;box-shadow:0 0 0 2px #fff;"></div><div style="left:2577.5px;top:471.0px;font-size:13.5px;line-height:16px;color:#fff;font-weight:700;transform:translateX(-50%);">138</div><svg style="position:absolute;left:2549px;top:813px;" width="39" height="39" viewBox="0 0 39 39"><rect x="18" y="2" width="3" height="9" rx="1.5" fill="#444" opacity="0.15" transform="rotate(0 19.5 19.5)"/><rect x="18" y="2" width="3" height="9" rx="1.5" fill="#444" opacity="0.93" transform="rotate(30 19.5 19.5)"/><rect x="18" y="2" width="3" height="9" rx="1.5" fill="#444" opacity="0.86" transform="rotate(60 19.5 19.5)"/><rect x="18" y="2" width="3" height="9" rx="1.5" fill="#444" opacity="0.79" transform="rotate(90 19.5 19.5)"/><rect x="18" y="2" width="3" height="9" rx="1.5" fill="#444" opacity="0.72" transform="rotate(120 19.5 19.5)"/><rect x="18" y="2" width="3" height="9" rx="1.5" fill="#444" opacity="0.65" transform="rotate(150 19.5 19.5)"/><rect x="18" y="2" width="3" height="9" rx="1.5" fill="#444" opacity="0.57" transform="rotate(180 19.5 19.5)"/><rect x="18" y="2" width="3" height="9" rx="1.5" fill="#444" opacity="0.50" transform="rotate(210 19.5 19.5)"/><rect x="18" y="2" width="3" height="9" rx="1.5" fill="#444" opacity="0.43" transform="rotate(240 19.5 19.5)"/><rect x="18" y="2" width="3" height="9" rx="1.5" fill="#444" opacity="0.36" transform="rotate(270 19.5 19.5)"/><rect x="18" y="2" width="3" height="9" rx="1.5" fill="#444" opacity="0.29" transform="rotate(300 19.5 19.5)"/><rect x="18" y="2" width="3" height="9" rx="1.5" fill="#444" opacity="0.22" transform="rotate(330 19.5 19.5)"/></svg><div style="left:2608px;top:64px;width:881px;height:65px;background:#fff;border-bottom:1px solid #e7e7e7;"></div><div style="left:2628.0px;top:75.0px;font-size:17.3px;line-height:20px;color:#222;-webkit-text-stroke:0.45px currentColor;">Neural Shit</div><div style="left:2628.0px;top:98.5px;font-size:16.3px;line-height:20px;color:#999;">49 927 subscribers</div><svg style="position:absolute;left:3360px;top:86px;" width="22" height="22" viewBox="0 0 22 22"><circle cx="8.5" cy="8.5" r="6.8" fill="none" stroke="#999" stroke-width="1.7"/><path d="M13.5 13.5 L19.5 19.5" stroke="#999" stroke-width="1.9" stroke-linecap="round"/></svg><svg style="position:absolute;left:3407px;top:86px;" width="23" height="20" viewBox="0 0 23 20"><rect x="1" y="1" width="21" height="18" rx="3" fill="none" stroke="#2d9fe3" stroke-width="2"/><path d="M14 1 V19" stroke="#2d9fe3" stroke-width="2"/></svg><svg style="position:absolute;left:3457px;top:85px;" width="8" height="22" viewBox="0 0 8 22"><circle cx="4" cy="3" r="2.4" fill="#999"/><circle cx="4" cy="11" r="2.4" fill="#999"/><circle cx="4" cy="19" r="2.4" fill="#999"/></svg><div class="fl" style="left:2608px;top:129px;width:881px;height:1975px;"><div style="left:-50px;top:-50px;width:981px;height:2075px;filter:blur(16px);"><div style="left:0;top:0.0px;width:981px;height:48.2px;background:linear-gradient(to right,rgb(107,165,135) 0.0%,rgb(107,165,135) 5.0%,rgb(107,165,135) 10.0%,rgb(107,165,135) 15.0%,rgb(108,165,135) 20.0%,rgb(109,166,135) 25.0%,rgb(113,168,135) 30.0%,rgb(119,171,136) 35.0%,rgb(130,176,136) 40.0%,rgb(146,184,137) 45.0%,rgb(165,193,138) 50.0%,rgb(182,201,139) 55.0%,rgb(196,208,140) 60.0%,rgb(204,212,140) 65.0%,rgb(209,214,141) 70.0%,rgb(211,215,141) 75.0%,rgb(212,216,141) 80.0%,rgb(213,216,141) 85.0%,rgb(213,216,141) 90.0%,rgb(213,216,141) 95.0%,rgb(213,216,141) 100.0%);"></div><div style="left:0;top:47.2px;width:981px;height:48.2px;background:linear-gradient(to right,rgb(107,165,135) 0.0%,rgb(107,165,135) 5.0%,rgb(107,165,135) 10.0%,rgb(107,165,135) 15.0%,rgb(108,165,135) 20.0%,rgb(110,166,135) 25.0%,rgb(113,168,135) 30.0%,rgb(119,171,136) 35.0%,rgb(131,176,136) 40.0%,rgb(147,184,137) 45.0%,rgb(166,193,138) 50.0%,rgb(183,202,139) 55.0%,rgb(196,208,140) 60.0%,rgb(204,212,141) 65.0%,rgb(209,214,141) 70.0%,rgb(211,215,141) 75.0%,rgb(212,216,141) 80.0%,rgb(212,216,141) 85.0%,rgb(212,216,141) 90.0%,rgb(212,216,141) 95.0%,rgb(212,216,141) 100.0%);"></div><div style="left:0;top:94.3px;width:981px;height:48.2px;background:linear-gradient(to right,rgb(107,165,135) 0.0%,rgb(107,165,135) 5.0%,rgb(107,165,135) 10.0%,rgb(107,165,135) 15.0%,rgb(108,166,135) 20.0%,rgb(110,166,135) 25.0%,rgb(113,168,135) 30.0%,rgb(120,171,136) 35.0%,rgb(132,177,136) 40.0%,rgb(149,185,137) 45.0%,rgb(168,194,138) 50.0%,rgb(185,203,139) 55.0%,rgb(198,209,140) 60.0%,rgb(205,212,141) 65.0%,rgb(209,214,141) 70.0%,rgb(211,215,141) 75.0%,rgb(212,216,141) 80.0%,rgb(212,216,141) 85.0%,rgb(212,216,141) 90.0%,rgb(212,216,141) 95.0%,rgb(212,216,141) 100.0%);"></div><div style="left:0;top:141.5px;width:981px;height:48.2px;background:linear-gradient(to right,rgb(107,165,135) 0.0%,rgb(107,165,135) 5.0%,rgb(107,165,135) 10.0%,rgb(107,165,135) 15.0%,rgb(108,166,135) 20.0%,rgb(110,166,135) 25.0%,rgb(114,168,135) 30.0%,rgb(121,172,136) 35.0%,rgb(134,178,137) 40.0%,rgb(152,186,138) 45.0%,rgb(171,196,139) 50.0%,rgb(187,204,140) 55.0%,rgb(199,209,140) 60.0%,rgb(206,213,141) 65.0%,rgb(209,214,141) 70.0%,rgb(211,215,141) 75.0%,rgb(212,215,141) 80.0%,rgb(212,216,141) 85.0%,rgb(212,216,141) 90.0%,rgb(212,215,141) 95.0%,rgb(212,215,141) 100.0%);"></div><div style="left:0;top:188.6px;width:981px;height:48.2px;background:linear-gradient(to right,rgb(107,165,135) 0.0%,rgb(107,165,135) 5.0%,rgb(107,165,135) 10.0%,rgb(107,165,135) 15.0%,rgb(108,166,135) 20.0%,rgb(110,167,135) 25.0%,rgb(115,169,135) 30.0%,rgb(123,173,136) 35.0%,rgb(136,179,137) 40.0%,rgb(154,188,138) 45.0%,rgb(173,197,139) 50.0%,rgb(189,205,140) 55.0%,rgb(200,210,140) 60.0%,rgb(206,213,141) 65.0%,rgb(210,214,141) 70.0%,rgb(211,215,141) 75.0%,rgb(212,215,141) 80.0%,rgb(212,215,141) 85.0%,rgb(211,215,141) 90.0%,rgb(211,215,141) 95.0%,rgb(211,215,141) 100.0%);"></div><div style="left:0;top:235.8px;width:981px;height:48.2px;background:linear-gradient(to right,rgb(107,165,135) 0.0%,rgb(107,165,135) 5.0%,rgb(107,165,135) 10.0%,rgb(107,165,135) 15.0%,rgb(108,166,135) 20.0%,rgb(111,167,135) 25.0%,rgb(115,169,135) 30.0%,rgb(124,173,136) 35.0%,rgb(138,180,137) 40.0%,rgb(157,189,138) 45.0%,rgb(176,198,139) 50.0%,rgb(191,206,140) 55.0%,rgb(201,210,140) 60.0%,rgb(207,213,141) 65.0%,rgb(210,214,141) 70.0%,rgb(211,215,141) 75.0%,rgb(211,215,141) 80.0%,rgb(211,215,141) 85.0%,rgb(211,215,141) 90.0%,rgb(211,215,141) 95.0%,rgb(211,215,141) 100.0%);"></div><div style="left:0;top:283.0px;width:981px;height:48.2px;background:linear-gradient(to right,rgb(107,165,135) 0.0%,rgb(107,165,135) 5.0%,rgb(107,165,135) 10.0%,rgb(108,165,135) 15.0%,rgb(109,166,135) 20.0%,rgb(111,167,135) 25.0%,rgb(116,169,136) 30.0%,rgb(125,174,136) 35.0%,rgb(140,181,137) 40.0%,rgb(159,190,138) 45.0%,rgb(178,199,139) 50.0%,rgb(193,206,140) 55.0%,rgb(202,211,140) 60.0%,rgb(207,213,141) 65.0%,rgb(210,215,141) 70.0%,rgb(211,215,141) 75.0%,rgb(211,215,141) 80.0%,rgb(211,215,141) 85.0%,rgb(210,215,141) 90.0%,rgb(210,215,141) 95.0%,rgb(210,215,141) 100.0%);"></div><div style="left:0;top:330.1px;width:981px;height:48.2px;background:linear-gradient(to right,rgb(107,165,135) 0.0%,rgb(107,165,135) 5.0%,rgb(107,165,135) 10.0%,rgb(108,165,135) 15.0%,rgb(109,166,135) 20.0%,rgb(112,167,135) 25.0%,rgb(117,170,136) 30.0%,rgb(127,175,136) 35.0%,rgb(142,182,137) 40.0%,rgb(162,191,138) 45.0%,rgb(180,200,139) 50.0%,rgb(195,207,140) 55.0%,rgb(203,211,140) 60.0%,rgb(208,214,141) 65.0%,rgb(210,215,141) 70.0%,rgb(211,215,141) 75.0%,rgb(211,215,141) 80.0%,rgb(210,215,141) 85.0%,rgb(210,215,141) 90.0%,rgb(209,214,141) 95.0%,rgb(209,214,141) 100.0%);"></div><div style="left:0;top:377.3px;width:981px;height:48.2px;background:linear-gradient(to right,rgb(107,165,135) 0.0%,rgb(107,165,135) 5.0%,rgb(107,165,135) 10.0%,rgb(108,165,135) 15.0%,rgb(109,166,135) 20.0%,rgb(112,167,135) 25.0%,rgb(118,170,136) 30.0%,rgb(129,175,136) 35.0%,rgb(145,183,137) 40.0%,rgb(164,193,138) 45.0%,rgb(183,201,139) 50.0%,rgb(196,208,140) 55.0%,rgb(204,212,140) 60.0%,rgb(208,214,141) 65.0%,rgb(210,215,141) 70.0%,rgb(210,215,141) 75.0%,rgb(210,215,141) 80.0%,rgb(210,215,141) 85.0%,rgb(209,214,141) 90.0%,rgb(208,214,140) 95.0%,rgb(208,214,140) 100.0%);"></div><div style="left:0;top:424.4px;width:981px;height:48.2px;background:linear-gradient(to right,rgb(107,165,135) 0.0%,rgb(107,165,135) 5.0%,rgb(108,165,135) 10.0%,rgb(108,166,135) 15.0%,rgb(110,166,135) 20.0%,rgb(113,168,135) 25.0%,rgb(119,171,136) 30.0%,rgb(131,176,136) 35.0%,rgb(147,184,137) 40.0%,rgb(167,194,138) 45.0%,rgb(185,202,139) 50.0%,rgb(197,208,140) 55.0%,rgb(204,212,140) 60.0%,rgb(208,214,141) 65.0%,rgb(210,215,141) 70.0%,rgb(210,215,141) 75.0%,rgb(210,215,141) 80.0%,rgb(209,214,141) 85.0%,rgb(208,214,140) 90.0%,rgb(207,213,140) 95.0%,rgb(207,213,140) 100.0%);"></div><div style="left:0;top:471.6px;width:981px;height:48.2px;background:linear-gradient(to right,rgb(107,165,135) 0.0%,rgb(107,165,135) 5.0%,rgb(108,165,135) 10.0%,rgb(109,166,135) 15.0%,rgb(110,167,135) 20.0%,rgb(114,168,135) 25.0%,rgb(121,172,136) 30.0%,rgb(133,177,137) 35.0%,rgb(150,186,137) 40.0%,rgb(169,195,139) 45.0%,rgb(187,203,139) 50.0%,rgb(198,209,140) 55.0%,rgb(205,212,140) 60.0%,rgb(208,214,141) 65.0%,rgb(210,214,141) 70.0%,rgb(210,215,141) 75.0%,rgb(209,214,141) 80.0%,rgb(208,214,140) 85.0%,rgb(207,213,140) 90.0%,rgb(206,213,140) 95.0%,rgb(206,213,140) 100.0%);"></div><div style="left:0;top:518.8px;width:981px;height:48.2px;background:linear-gradient(to right,rgb(108,165,135) 0.0%,rgb(108,165,135) 5.0%,rgb(108,166,135) 10.0%,rgb(109,166,135) 15.0%,rgb(111,167,135) 20.0%,rgb(115,169,136) 25.0%,rgb(122,172,136) 30.0%,rgb(135,178,137) 35.0%,rgb(152,187,138) 40.0%,rgb(172,196,139) 45.0%,rgb(188,204,140) 50.0%,rgb(199,209,140) 55.0%,rgb(205,212,140) 60.0%,rgb(208,214,141) 65.0%,rgb(209,214,141) 70.0%,rgb(209,214,141) 75.0%,rgb(209,214,140) 80.0%,rgb(207,214,140) 85.0%,rgb(206,213,140) 90.0%,rgb(204,212,140) 95.0%,rgb(204,212,140) 100.0%);"></div><div style="left:0;top:565.9px;width:981px;height:48.2px;background:linear-gradient(to right,rgb(108,166,135) 0.0%,rgb(108,166,135) 5.0%,rgb(109,166,135) 10.0%,rgb(110,166,136) 15.0%,rgb(112,167,136) 20.0%,rgb(116,169,136) 25.0%,rgb(124,173,136) 30.0%,rgb(137,180,137) 35.0%,rgb(155,188,138) 40.0%,rgb(174,197,139) 45.0%,rgb(190,205,140) 50.0%,rgb(200,210,140) 55.0%,rgb(205,212,140) 60.0%,rgb(208,214,141) 65.0%,rgb(209,214,141) 70.0%,rgb(209,214,141) 75.0%,rgb(208,214,140) 80.0%,rgb(206,213,140) 85.0%,rgb(204,212,140) 90.0%,rgb(202,211,140) 95.0%,rgb(202,211,140) 100.0%);"></div><div style="left:0;top:613.1px;width:981px;height:48.2px;background:linear-gradient(to right,rgb(109,166,136) 0.0%,rgb(109,166,136) 5.0%,rgb(109,166,136) 10.0%,rgb(111,167,136) 15.0%,rgb(113,168,136) 20.0%,rgb(118,170,136) 25.0%,rgb(126,174,137) 30.0%,rgb(140,181,137) 35.0%,rgb(158,190,138) 40.0%,rgb(176,198,139) 45.0%,rgb(191,205,140) 50.0%,rgb(200,210,140) 55.0%,rgb(205,212,140) 60.0%,rgb(207,214,140) 65.0%,rgb(209,214,141) 70.0%,rgb(208,214,140) 75.0%,rgb(207,213,140) 80.0%,rgb(205,213,140) 85.0%,rgb(202,212,140) 90.0%,rgb(200,211,139) 95.0%,rgb(200,211,139) 100.0%);"></div><div style="left:0;top:660.2px;width:981px;height:48.2px;background:linear-gradient(to right,rgb(110,167,136) 0.0%,rgb(110,167,136) 5.0%,rgb(111,167,136) 10.0%,rgb(112,167,136) 15.0%,rgb(115,169,137) 20.0%,rgb(120,171,137) 25.0%,rgb(129,175,137) 30.0%,rgb(143,182,138) 35.0%,rgb(161,191,138) 40.0%,rgb(178,199,139) 45.0%,rgb(192,206,140) 50.0%,rgb(200,210,140) 55.0%,rgb(205,212,140) 60.0%,rgb(207,213,140) 65.0%,rgb(208,214,140) 70.0%,rgb(207,214,140) 75.0%,rgb(205,213,140) 80.0%,rgb(203,212,140) 85.0%,rgb(200,211,140) 90.0%,rgb(198,210,139) 95.0%,rgb(198,210,139) 100.0%);"></div><div style="left:0;top:707.4px;width:981px;height:48.2px;background:linear-gradient(to right,rgb(112,167,137) 0.0%,rgb(112,167,137) 5.0%,rgb(112,168,137) 10.0%,rgb(114,168,137) 15.0%,rgb(117,170,137) 20.0%,rgb(122,172,137) 25.0%,rgb(131,177,138) 30.0%,rgb(146,184,138) 35.0%,rgb(163,192,139) 40.0%,rgb(180,200,139) 45.0%,rgb(192,206,140) 50.0%,rgb(200,210,140) 55.0%,rgb(204,212,140) 60.0%,rgb(206,213,140) 65.0%,rgb(206,213,140) 70.0%,rgb(206,213,140) 75.0%,rgb(204,212,140) 80.0%,rgb(201,211,140) 85.0%,rgb(198,210,139) 90.0%,rgb(195,208,139) 95.0%,rgb(195,208,139) 100.0%);"></div><div style="left:0;top:754.5px;width:981px;height:48.2px;background:linear-gradient(to right,rgb(114,169,138) 0.0%,rgb(114,169,138) 5.0%,rgb(115,169,138) 10.0%,rgb(116,170,138) 15.0%,rgb(119,171,138) 20.0%,rgb(125,174,139) 25.0%,rgb(135,178,139) 30.0%,rgb(149,185,139) 35.0%,rgb(166,194,139) 40.0%,rgb(181,201,140) 45.0%,rgb(193,207,140) 50.0%,rgb(199,210,140) 55.0%,rgb(203,212,140) 60.0%,rgb(204,212,140) 65.0%,rgb(205,213,140) 70.0%,rgb(204,212,140) 75.0%,rgb(201,211,140) 80.0%,rgb(198,210,139) 85.0%,rgb(195,208,139) 90.0%,rgb(191,207,138) 95.0%,rgb(191,207,138) 100.0%);"></div><div style="left:0;top:801.7px;width:981px;height:48.2px;background:linear-gradient(to right,rgb(118,170,140) 0.0%,rgb(118,170,140) 5.0%,rgb(118,171,140) 10.0%,rgb(120,171,140) 15.0%,rgb(123,173,140) 20.0%,rgb(129,176,140) 25.0%,rgb(139,180,140) 30.0%,rgb(153,187,140) 35.0%,rgb(169,195,140) 40.0%,rgb(183,202,140) 45.0%,rgb(193,207,140) 50.0%,rgb(199,210,140) 55.0%,rgb(201,211,140) 60.0%,rgb(203,212,140) 65.0%,rgb(202,212,140) 70.0%,rgb(201,211,140) 75.0%,rgb(199,210,139) 80.0%,rgb(195,209,139) 85.0%,rgb(191,207,138) 90.0%,rgb(188,206,138) 95.0%,rgb(188,206,138) 100.0%);"></div><div style="left:0;top:848.9px;width:981px;height:48.2px;background:linear-gradient(to right,rgb(122,173,142) 0.0%,rgb(122,173,142) 5.0%,rgb(123,173,142) 10.0%,rgb(125,174,142) 15.0%,rgb(128,175,142) 20.0%,rgb(134,178,142) 25.0%,rgb(143,183,142) 30.0%,rgb(156,189,141) 35.0%,rgb(171,196,141) 40.0%,rgb(184,203,140) 45.0%,rgb(193,207,140) 50.0%,rgb(198,209,140) 55.0%,rgb(200,210,140) 60.0%,rgb(200,211,140) 65.0%,rgb(200,210,139) 70.0%,rgb(198,210,139) 75.0%,rgb(195,209,139) 80.0%,rgb(192,207,138) 85.0%,rgb(188,205,138) 90.0%,rgb(184,204,138) 95.0%,rgb(184,204,138) 100.0%);"></div><div style="left:0;top:896.0px;width:981px;height:48.2px;background:linear-gradient(to right,rgb(129,176,145) 0.0%,rgb(129,176,145) 5.0%,rgb(129,176,145) 10.0%,rgb(131,177,145) 15.0%,rgb(134,178,145) 20.0%,rgb(139,181,144) 25.0%,rgb(148,185,144) 30.0%,rgb(161,191,143) 35.0%,rgb(174,198,142) 40.0%,rgb(185,203,141) 45.0%,rgb(192,207,140) 50.0%,rgb(196,209,140) 55.0%,rgb(198,209,139) 60.0%,rgb(198,210,139) 65.0%,rgb(197,209,139) 70.0%,rgb(194,208,139) 75.0%,rgb(191,207,138) 80.0%,rgb(187,205,138) 85.0%,rgb(183,204,138) 90.0%,rgb(179,202,137) 95.0%,rgb(179,202,137) 100.0%);"></div><div style="left:0;top:943.2px;width:981px;height:48.2px;background:linear-gradient(to right,rgb(137,180,149) 0.0%,rgb(137,180,149) 5.0%,rgb(137,180,149) 10.0%,rgb(139,181,148) 15.0%,rgb(141,182,148) 20.0%,rgb(146,184,148) 25.0%,rgb(154,188,147) 30.0%,rgb(165,193,145) 35.0%,rgb(176,199,143) 40.0%,rgb(186,204,142) 45.0%,rgb(192,207,140) 50.0%,rgb(194,208,140) 55.0%,rgb(195,208,139) 60.0%,rgb(194,208,139) 65.0%,rgb(193,208,139) 70.0%,rgb(190,207,138) 75.0%,rgb(187,205,138) 80.0%,rgb(183,203,137) 85.0%,rgb(179,202,137) 90.0%,rgb(175,200,137) 95.0%,rgb(175,200,137) 100.0%);"></div><div style="left:0;top:990.3px;width:981px;height:48.2px;background:linear-gradient(to right,rgb(146,185,153) 0.0%,rgb(146,185,153) 5.0%,rgb(147,185,153) 10.0%,rgb(148,185,153) 15.0%,rgb(150,187,152) 20.0%,rgb(154,189,151) 25.0%,rgb(161,192,150) 30.0%,rgb(170,196,148) 35.0%,rgb(179,200,145) 40.0%,rgb(186,204,142) 45.0%,rgb(190,206,141) 50.0%,rgb(192,207,140) 55.0%,rgb(192,207,139) 60.0%,rgb(191,207,139) 65.0%,rgb(189,206,138) 70.0%,rgb(186,205,138) 75.0%,rgb(182,203,137) 80.0%,rgb(178,201,137) 85.0%,rgb(174,200,136) 90.0%,rgb(170,198,136) 95.0%,rgb(170,198,136) 100.0%);"></div><div style="left:0;top:1037.5px;width:981px;height:48.2px;background:linear-gradient(to right,rgb(157,190,158) 0.0%,rgb(157,190,158) 5.0%,rgb(157,190,158) 10.0%,rgb(158,191,158) 15.0%,rgb(160,191,157) 20.0%,rgb(163,193,156) 25.0%,rgb(168,195,154) 30.0%,rgb(175,199,151) 35.0%,rgb(182,202,147) 40.0%,rgb(187,204,144) 45.0%,rgb(189,206,141) 50.0%,rgb(190,206,140) 55.0%,rgb(189,206,139) 60.0%,rgb(187,205,138) 65.0%,rgb(184,204,138) 70.0%,rgb(181,203,137) 75.0%,rgb(177,201,137) 80.0%,rgb(173,199,136) 85.0%,rgb(169,198,136) 90.0%,rgb(166,196,135) 95.0%,rgb(166,196,135) 100.0%);"></div><div style="left:0;top:1084.7px;width:981px;height:48.2px;background:linear-gradient(to right,rgb(168,196,163) 0.0%,rgb(168,196,163) 5.0%,rgb(168,196,163) 10.0%,rgb(169,196,163) 15.0%,rgb(170,197,162) 20.0%,rgb(172,198,161) 25.0%,rgb(176,199,158) 30.0%,rgb(180,201,154) 35.0%,rgb(184,203,149) 40.0%,rgb(187,205,145) 45.0%,rgb(188,205,142) 50.0%,rgb(187,205,140) 55.0%,rgb(185,204,138) 60.0%,rgb(183,203,138) 65.0%,rgb(179,202,137) 70.0%,rgb(176,200,137) 75.0%,rgb(171,199,136) 80.0%,rgb(168,197,136) 85.0%,rgb(164,196,135) 90.0%,rgb(161,195,135) 95.0%,rgb(161,195,135) 100.0%);"></div><div style="left:0;top:1131.8px;width:981px;height:48.2px;background:linear-gradient(to right,rgb(179,201,168) 0.0%,rgb(179,201,168) 5.0%,rgb(179,201,168) 10.0%,rgb(180,201,168) 15.0%,rgb(180,202,167) 20.0%,rgb(181,202,165) 25.0%,rgb(183,203,162) 30.0%,rgb(185,204,157) 35.0%,rgb(187,205,152) 40.0%,rgb(187,205,146) 45.0%,rgb(186,205,142) 50.0%,rgb(184,204,140) 55.0%,rgb(181,203,138) 60.0%,rgb(178,201,137) 65.0%,rgb(174,200,137) 70.0%,rgb(170,198,136) 75.0%,rgb(166,197,136) 80.0%,rgb(163,195,135) 85.0%,rgb(160,194,135) 90.0%,rgb(157,193,135) 95.0%,rgb(157,193,135) 100.0%);"></div><div style="left:0;top:1179.0px;width:981px;height:48.2px;background:linear-gradient(to right,rgb(189,206,173) 0.0%,rgb(189,206,173) 5.0%,rgb(189,206,173) 10.0%,rgb(189,206,172) 15.0%,rgb(189,206,172) 20.0%,rgb(190,206,170) 25.0%,rgb(190,206,166) 30.0%,rgb(190,206,161) 35.0%,rgb(189,206,155) 40.0%,rgb(187,205,148) 45.0%,rgb(184,204,143) 50.0%,rgb(181,203,140) 55.0%,rgb(177,201,138) 60.0%,rgb(174,200,137) 65.0%,rgb(170,198,136) 70.0%,rgb(165,196,135) 75.0%,rgb(161,195,135) 80.0%,rgb(158,193,135) 85.0%,rgb(156,192,134) 90.0%,rgb(154,191,134) 95.0%,rgb(154,191,134) 100.0%);"></div><div style="left:0;top:1226.1px;width:981px;height:48.2px;background:linear-gradient(to right,rgb(197,210,177) 0.0%,rgb(197,210,177) 5.0%,rgb(197,210,177) 10.0%,rgb(197,210,176) 15.0%,rgb(197,210,176) 20.0%,rgb(197,210,174) 25.0%,rgb(196,210,170) 30.0%,rgb(194,209,165) 35.0%,rgb(191,207,157) 40.0%,rgb(187,205,150) 45.0%,rgb(182,203,144) 50.0%,rgb(178,201,140) 55.0%,rgb(174,200,138) 60.0%,rgb(169,198,136) 65.0%,rgb(165,196,136) 70.0%,rgb(161,194,135) 75.0%,rgb(157,193,134) 80.0%,rgb(154,191,134) 85.0%,rgb(152,191,134) 90.0%,rgb(150,190,134) 95.0%,rgb(150,190,134) 100.0%);"></div><div style="left:0;top:1273.3px;width:981px;height:48.2px;background:linear-gradient(to right,rgb(203,213,180) 0.0%,rgb(203,213,180) 5.0%,rgb(203,213,180) 10.0%,rgb(203,213,179) 15.0%,rgb(203,213,179) 20.0%,rgb(203,213,177) 25.0%,rgb(201,212,174) 30.0%,rgb(198,211,168) 35.0%,rgb(193,209,160) 40.0%,rgb(187,206,152) 45.0%,rgb(181,203,145) 50.0%,rgb(175,200,140) 55.0%,rgb(170,198,138) 60.0%,rgb(165,196,136) 65.0%,rgb(161,194,135) 70.0%,rgb(157,193,134) 75.0%,rgb(153,191,134) 80.0%,rgb(150,190,134) 85.0%,rgb(149,189,133) 90.0%,rgb(148,189,133) 95.0%,rgb(148,189,133) 100.0%);"></div><div style="left:0;top:1320.5px;width:981px;height:48.2px;background:linear-gradient(to right,rgb(208,216,182) 0.0%,rgb(208,216,182) 5.0%,rgb(208,216,182) 10.0%,rgb(208,216,182) 15.0%,rgb(208,216,181) 20.0%,rgb(207,215,180) 25.0%,rgb(205,214,177) 30.0%,rgb(202,213,171) 35.0%,rgb(196,210,163) 40.0%,rgb(188,206,154) 45.0%,rgb(179,202,146) 50.0%,rgb(172,199,141) 55.0%,rgb(166,197,138) 60.0%,rgb(161,195,136) 65.0%,rgb(157,193,135) 70.0%,rgb(153,191,134) 75.0%,rgb(150,190,134) 80.0%,rgb(147,189,133) 85.0%,rgb(146,188,133) 90.0%,rgb(145,188,133) 95.0%,rgb(145,188,133) 100.0%);"></div><div style="left:0;top:1367.6px;width:981px;height:48.2px;background:linear-gradient(to right,rgb(212,217,184) 0.0%,rgb(212,217,184) 5.0%,rgb(212,217,184) 10.0%,rgb(212,217,184) 15.0%,rgb(212,217,183) 20.0%,rgb(211,217,182) 25.0%,rgb(209,216,179) 30.0%,rgb(205,214,174) 35.0%,rgb(197,211,166) 40.0%,rgb(188,206,156) 45.0%,rgb(178,202,147) 50.0%,rgb(170,198,141) 55.0%,rgb(163,195,138) 60.0%,rgb(158,193,136) 65.0%,rgb(154,191,134) 70.0%,rgb(150,190,134) 75.0%,rgb(147,189,133) 80.0%,rgb(145,188,133) 85.0%,rgb(144,187,133) 90.0%,rgb(144,187,133) 95.0%,rgb(144,187,133) 100.0%);"></div><div style="left:0;top:1414.8px;width:981px;height:48.2px;background:linear-gradient(to right,rgb(214,219,185) 0.0%,rgb(214,219,185) 5.0%,rgb(214,219,185) 10.0%,rgb(214,219,185) 15.0%,rgb(214,219,184) 20.0%,rgb(213,218,183) 25.0%,rgb(211,217,181) 30.0%,rgb(207,215,176) 35.0%,rgb(199,212,168) 40.0%,rgb(189,207,158) 45.0%,rgb(177,202,149) 50.0%,rgb(168,198,142) 55.0%,rgb(161,194,138) 60.0%,rgb(155,192,135) 65.0%,rgb(151,190,134) 70.0%,rgb(148,189,133) 75.0%,rgb(145,188,133) 80.0%,rgb(143,187,133) 85.0%,rgb(142,187,133) 90.0%,rgb(142,186,133) 95.0%,rgb(142,186,133) 100.0%);"></div><div style="left:0;top:1461.9px;width:981px;height:48.2px;background:linear-gradient(to right,rgb(216,220,186) 0.0%,rgb(216,220,186) 5.0%,rgb(216,220,186) 10.0%,rgb(216,220,186) 15.0%,rgb(216,219,185) 20.0%,rgb(215,219,184) 25.0%,rgb(213,218,182) 30.0%,rgb(209,216,178) 35.0%,rgb(201,213,171) 40.0%,rgb(189,207,161) 45.0%,rgb(177,202,150) 50.0%,rgb(166,197,143) 55.0%,rgb(158,193,138) 60.0%,rgb(153,191,135) 65.0%,rgb(149,189,134) 70.0%,rgb(145,188,133) 75.0%,rgb(143,187,133) 80.0%,rgb(141,186,133) 85.0%,rgb(141,186,133) 90.0%,rgb(141,186,133) 95.0%,rgb(141,186,133) 100.0%);"></div><div style="left:0;top:1509.1px;width:981px;height:48.2px;background:linear-gradient(to right,rgb(217,220,186) 0.0%,rgb(217,220,186) 5.0%,rgb(217,220,186) 10.0%,rgb(217,220,186) 15.0%,rgb(217,220,186) 20.0%,rgb(216,220,185) 25.0%,rgb(214,219,183) 30.0%,rgb(210,217,180) 35.0%,rgb(202,213,173) 40.0%,rgb(190,208,163) 45.0%,rgb(177,202,152) 50.0%,rgb(165,196,143) 55.0%,rgb(156,193,138) 60.0%,rgb(151,190,135) 65.0%,rgb(147,189,134) 70.0%,rgb(144,187,133) 75.0%,rgb(142,186,133) 80.0%,rgb(140,186,132) 85.0%,rgb(140,186,132) 90.0%,rgb(140,186,132) 95.0%,rgb(140,186,132) 100.0%);"></div><div style="left:0;top:1556.2px;width:981px;height:48.2px;background:linear-gradient(to right,rgb(218,220,187) 0.0%,rgb(218,220,187) 5.0%,rgb(218,220,187) 10.0%,rgb(218,220,186) 15.0%,rgb(218,220,186) 20.0%,rgb(217,220,186) 25.0%,rgb(215,219,184) 30.0%,rgb(211,217,181) 35.0%,rgb(204,214,174) 40.0%,rgb(192,208,164) 45.0%,rgb(177,202,153) 50.0%,rgb(164,196,144) 55.0%,rgb(155,192,138) 60.0%,rgb(149,190,135) 65.0%,rgb(145,188,134) 70.0%,rgb(143,187,133) 75.0%,rgb(141,186,133) 80.0%,rgb(139,185,132) 85.0%,rgb(139,185,132) 90.0%,rgb(139,185,132) 95.0%,rgb(139,185,132) 100.0%);"></div><div style="left:0;top:1603.4px;width:981px;height:48.2px;background:linear-gradient(to right,rgb(218,221,187) 0.0%,rgb(218,221,187) 5.0%,rgb(218,221,187) 10.0%,rgb(218,221,187) 15.0%,rgb(218,221,187) 20.0%,rgb(218,220,186) 25.0%,rgb(216,220,185) 30.0%,rgb(212,218,182) 35.0%,rgb(205,215,176) 40.0%,rgb(193,209,166) 45.0%,rgb(178,202,155) 50.0%,rgb(164,196,145) 55.0%,rgb(154,192,139) 60.0%,rgb(148,189,135) 65.0%,rgb(144,187,134) 70.0%,rgb(142,186,133) 75.0%,rgb(140,186,133) 80.0%,rgb(139,185,132) 85.0%,rgb(139,185,132) 90.0%,rgb(139,185,132) 95.0%,rgb(139,185,132) 100.0%);"></div><div style="left:0;top:1650.6px;width:981px;height:48.2px;background:linear-gradient(to right,rgb(219,221,187) 0.0%,rgb(219,221,187) 5.0%,rgb(219,221,187) 10.0%,rgb(219,221,187) 15.0%,rgb(219,221,187) 20.0%,rgb(218,221,186) 25.0%,rgb(217,220,185) 30.0%,rgb(213,218,183) 35.0%,rgb(206,215,177) 40.0%,rgb(194,210,168) 45.0%,rgb(178,203,157) 50.0%,rgb(164,196,146) 55.0%,rgb(153,191,139) 60.0%,rgb(147,189,135) 65.0%,rgb(143,187,134) 70.0%,rgb(141,186,133) 75.0%,rgb(139,185,132) 80.0%,rgb(139,185,132) 85.0%,rgb(138,185,132) 90.0%,rgb(138,185,132) 95.0%,rgb(138,185,132) 100.0%);"></div><div style="left:0;top:1697.7px;width:981px;height:48.2px;background:linear-gradient(to right,rgb(219,221,187) 0.0%,rgb(219,221,187) 5.0%,rgb(219,221,187) 10.0%,rgb(219,221,187) 15.0%,rgb(219,221,187) 20.0%,rgb(218,221,186) 25.0%,rgb(217,220,186) 30.0%,rgb(214,219,183) 35.0%,rgb(207,216,178) 40.0%,rgb(195,210,169) 45.0%,rgb(180,203,158) 50.0%,rgb(164,196,147) 55.0%,rgb(153,191,140) 60.0%,rgb(146,188,136) 65.0%,rgb(142,187,134) 70.0%,rgb(140,186,133) 75.0%,rgb(139,185,132) 80.0%,rgb(138,185,132) 85.0%,rgb(138,185,132) 90.0%,rgb(138,185,132) 95.0%,rgb(138,185,132) 100.0%);"></div><div style="left:0;top:1744.9px;width:981px;height:48.2px;background:linear-gradient(to right,rgb(219,221,187) 0.0%,rgb(219,221,187) 5.0%,rgb(219,221,187) 10.0%,rgb(219,221,187) 15.0%,rgb(219,221,187) 20.0%,rgb(218,221,187) 25.0%,rgb(217,220,186) 30.0%,rgb(214,219,184) 35.0%,rgb(208,216,179) 40.0%,rgb(197,211,171) 45.0%,rgb(181,204,160) 50.0%,rgb(165,197,148) 55.0%,rgb(153,191,140) 60.0%,rgb(146,188,136) 65.0%,rgb(142,186,134) 70.0%,rgb(140,186,133) 75.0%,rgb(139,185,132) 80.0%,rgb(138,185,132) 85.0%,rgb(138,185,132) 90.0%,rgb(137,185,132) 95.0%,rgb(137,185,132) 100.0%);"></div><div style="left:0;top:1792.0px;width:981px;height:48.2px;background:linear-gradient(to right,rgb(219,221,187) 0.0%,rgb(219,221,187) 5.0%,rgb(219,221,187) 10.0%,rgb(219,221,187) 15.0%,rgb(219,221,187) 20.0%,rgb(219,221,187) 25.0%,rgb(218,220,186) 30.0%,rgb(215,219,184) 35.0%,rgb(209,217,180) 40.0%,rgb(198,212,172) 45.0%,rgb(182,205,161) 50.0%,rgb(166,197,150) 55.0%,rgb(153,191,141) 60.0%,rgb(145,188,136) 65.0%,rgb(141,186,134) 70.0%,rgb(139,185,133) 75.0%,rgb(138,185,132) 80.0%,rgb(138,185,132) 85.0%,rgb(137,185,132) 90.0%,rgb(137,184,132) 95.0%,rgb(137,184,132) 100.0%);"></div><div style="left:0;top:1839.2px;width:981px;height:48.2px;background:linear-gradient(to right,rgb(219,221,187) 0.0%,rgb(219,221,187) 5.0%,rgb(219,221,187) 10.0%,rgb(219,221,187) 15.0%,rgb(219,221,187) 20.0%,rgb(219,221,187) 25.0%,rgb(218,220,186) 30.0%,rgb(215,219,184) 35.0%,rgb(210,217,181) 40.0%,rgb(199,212,173) 45.0%,rgb(184,205,163) 50.0%,rgb(167,198,151) 55.0%,rgb(153,192,142) 60.0%,rgb(145,188,137) 65.0%,rgb(141,186,134) 70.0%,rgb(139,185,133) 75.0%,rgb(138,185,132) 80.0%,rgb(137,185,132) 85.0%,rgb(137,184,132) 90.0%,rgb(137,184,132) 95.0%,rgb(137,184,132) 100.0%);"></div><div style="left:0;top:1886.4px;width:981px;height:48.2px;background:linear-gradient(to right,rgb(219,221,187) 0.0%,rgb(219,221,187) 5.0%,rgb(219,221,187) 10.0%,rgb(219,221,187) 15.0%,rgb(219,221,187) 20.0%,rgb(219,221,187) 25.0%,rgb(218,220,186) 30.0%,rgb(216,220,185) 35.0%,rgb(211,217,181) 40.0%,rgb(201,213,174) 45.0%,rgb(185,206,164) 50.0%,rgb(168,198,152) 55.0%,rgb(154,192,143) 60.0%,rgb(145,188,137) 65.0%,rgb(141,186,134) 70.0%,rgb(139,185,133) 75.0%,rgb(138,185,132) 80.0%,rgb(137,184,132) 85.0%,rgb(137,184,132) 90.0%,rgb(137,184,132) 95.0%,rgb(137,184,132) 100.0%);"></div><div style="left:0;top:1933.5px;width:981px;height:48.2px;background:linear-gradient(to right,rgb(219,221,187) 0.0%,rgb(219,221,187) 5.0%,rgb(219,221,187) 10.0%,rgb(219,221,187) 15.0%,rgb(219,221,187) 20.0%,rgb(219,221,187) 25.0%,rgb(218,221,186) 30.0%,rgb(216,220,185) 35.0%,rgb(211,218,182) 40.0%,rgb(202,213,175) 45.0%,rgb(187,207,165) 50.0%,rgb(170,199,154) 55.0%,rgb(155,192,144) 60.0%,rgb(145,188,137) 65.0%,rgb(141,186,134) 70.0%,rgb(138,185,133) 75.0%,rgb(137,185,132) 80.0%,rgb(137,184,132) 85.0%,rgb(137,184,132) 90.0%,rgb(137,184,132) 95.0%,rgb(137,184,132) 100.0%);"></div><div style="left:0;top:1980.7px;width:981px;height:48.2px;background:linear-gradient(to right,rgb(219,221,187) 0.0%,rgb(219,221,187) 5.0%,rgb(219,221,187) 10.0%,rgb(219,221,187) 15.0%,rgb(219,221,187) 20.0%,rgb(219,221,187) 25.0%,rgb(218,221,186) 30.0%,rgb(216,220,185) 35.0%,rgb(212,218,182) 40.0%,rgb(203,214,176) 45.0%,rgb(189,208,167) 50.0%,rgb(171,200,155) 55.0%,rgb(156,193,145) 60.0%,rgb(146,188,138) 65.0%,rgb(141,186,134) 70.0%,rgb(138,185,133) 75.0%,rgb(137,184,132) 80.0%,rgb(137,184,132) 85.0%,rgb(136,184,132) 90.0%,rgb(136,184,132) 95.0%,rgb(136,184,132) 100.0%);"></div><div style="left:0;top:2027.8px;width:981px;height:48.2px;background:linear-gradient(to right,rgb(219,221,187) 0.0%,rgb(219,221,187) 5.0%,rgb(219,221,187) 10.0%,rgb(219,221,187) 15.0%,rgb(219,221,187) 20.0%,rgb(219,221,187) 25.0%,rgb(218,221,186) 30.0%,rgb(216,220,185) 35.0%,rgb(212,218,182) 40.0%,rgb(204,214,177) 45.0%,rgb(190,208,167) 50.0%,rgb(172,200,155) 55.0%,rgb(156,193,145) 60.0%,rgb(146,188,138) 65.0%,rgb(141,186,135) 70.0%,rgb(138,185,133) 75.0%,rgb(137,184,132) 80.0%,rgb(137,184,132) 85.0%,rgb(136,184,132) 90.0%,rgb(136,184,132) 95.0%,rgb(136,184,132) 100.0%);"></div></div></div><svg style="position:absolute;left:2608px;top:129px;" width="881" height="1975" viewBox="0 0 881 1975"><defs><pattern id="dood" x="0" y="0" width="360" height="380" patternUnits="userSpaceOnUse">
<g fill="none" stroke="rgba(70,120,40,.2)" stroke-width="1.8" stroke-linecap="round" stroke-linejoin="round">
<path d="M30 40 L36 28 L42 40 L55 41 L45 50 L48 63 L36 56 L24 63 L27 50 L17 41 Z"/>
<circle cx="110" cy="30" r="6"/><circle cx="250" cy="20" r="4"/><circle cx="330" cy="90" r="5"/>
<path d="M150 80 C140 60 170 50 175 70 C180 50 210 60 200 80 L175 105 Z"/>
<path d="M250 60 L300 110 M245 70 C235 60 250 45 258 55 C262 42 278 50 270 62 M295 100 C305 110 290 125 282 115 C278 128 262 120 270 108"/>
<path d="M40 150 C40 120 90 110 100 140 C110 170 80 200 60 190 C45 185 40 170 40 150 Z M55 150 C60 140 75 140 78 152"/>
<path d="M160 170 Q180 130 220 150 Q250 170 230 200 Q210 230 180 210 Q150 195 160 170 Z"/>
<path d="M290 160 C300 140 330 150 320 175 C340 180 335 210 310 205 C300 225 270 215 280 195 C260 185 270 160 290 160 Z"/>
<path d="M20 260 C40 240 60 280 80 260 C100 240 120 280 140 260"/>
<circle cx="200" cy="270" r="22"/><path d="M190 265 A4 4 0 0 1 198 265 M204 265 A4 4 0 0 1 212 265 M192 278 Q200 286 210 278"/>
<path d="M270 250 L285 300 L300 250 Z M270 250 Q285 235 300 250"/>
<path d="M40 330 C60 310 90 320 95 345 C100 370 70 375 55 360"/><circle cx="140" cy="340" r="5"/>
<path d="M170 320 L230 360 M180 310 C170 300 185 290 190 302 M225 370 C235 380 220 390 215 378"/>
<path d="M280 330 Q300 300 320 330 Q340 360 310 370 Q280 375 280 330 Z"/>
<path d="M120 220 A10 10 0 1 1 130 230 A5 5 0 1 1 125 222"/>
</g></pattern>
<pattern id="dood2" x="170" y="190" width="430" height="350" patternUnits="userSpaceOnUse">
<g fill="none" stroke="rgba(70,120,40,.2)" stroke-width="1.8" stroke-linecap="round" stroke-linejoin="round">
<path d="M20 60 C10 20 70 10 80 50 C90 90 40 110 20 60 Z M35 55 A3 3 0 1 0 41 55"/>
<path d="M130 30 L170 90 M125 40 A8 8 0 1 1 140 32 M165 95 A8 8 0 1 0 178 85"/>
<path d="M230 40 Q260 0 290 40 T350 40"/><circle cx="400" cy="30" r="7"/>
<path d="M60 170 C60 140 110 140 110 170 C110 200 85 220 60 200 Z M70 165 L100 165"/>
<path d="M180 150 L200 120 L220 150 L205 220 L195 220 Z"/>
<path d="M300 130 C330 110 380 130 370 170 C360 210 300 220 290 180 C285 160 290 140 300 130 Z M310 160 A6 6 0 1 0 322 160"/>
<path d="M20 280 L60 250 L100 280 L60 310 Z"/><circle cx="150" cy="270" r="4"/>
<path d="M200 260 C220 230 260 240 255 270 C250 300 210 310 195 290"/>
<path d="M320 260 L340 240 L360 260 L380 240 M330 300 Q360 320 390 300"/>
</g></pattern></defs>
<rect width="881" height="1975" fill="url(#dood)"/><rect width="881" height="1975" fill="url(#dood2)"/></svg><div class="fl" style="left:2608px;top:129px;width:881px;height:1975px;"><div style="left:19px;top:-69px;width:516px;height:234px;background:#fff;border-radius:16px 16px 16px 0;"></div><svg style="position:absolute;left:11px;top:153px;" width="10" height="12" viewBox="0 0 10 12"><path d="M10 0 V12 H0 C4 11 8 8 10 0 Z" fill="#fff"/></svg><div style="left:32.0px;top:-19.0px;font-size:16.9px;line-height:22px;color:#000;">◆ небольшим проектам — до 50 000 бонусов</div><svg style="position:absolute;left:36px;top:5px;" width="17" height="17" viewBox="0 0 17 17"><path d="M8.5 0.5 L16.5 8.5 L8.5 16.5 L0.5 8.5 Z" fill="#2f7fe0"/><path d="M8.5 0.5 L16.5 8.5 L8.5 8.5 Z" fill="#7ab8f5"/></svg><div style="left:60.0px;top:2.7px;font-size:16.9px;line-height:22px;color:#000;">крупным проектам — до 1 000 000 бонусов на бесплатный</div><div style="left:32.0px;top:24.8px;font-size:16.9px;line-height:22px;color:#000;">переезд на инфраструктуру Selectel.</div><div style="left:32.0px;top:68.4px;font-size:16.9px;line-height:22px;color:#000;">Новогодняя почта принимает письма до 30 января 2026 года.</div><div style="left:32.0px;top:90.5px;font-size:16.9px;line-height:22px;color:#000;"><b>Напишите свое сейчас</b> <span style="display:inline-block;width:22px;height:19px;background:#5b7fa8;border-radius:4px;vertical-align:-3px;color:#fff;font-size:15px;line-height:19px;text-align:center;font-weight:700;">➜</span> <span style="color:#168acd">https://slc.tl/su2h8</span></div><div style="left:32.0px;top:134.0px;font-size:16.9px;line-height:22px;color:#000;"><i>Реклама. АО "Селектел". erid:2W5zFJVRep8</i></div><svg style="position:absolute;left:412px;top:145px;" width="17" height="12" viewBox="0 0 17 12"><path d="M1 6 C4 1 13 1 16 6 C13 11 4 11 1 6 Z" fill="#a0acb6"/><circle cx="8.5" cy="6" r="2.8" fill="#fff"/><circle cx="8.5" cy="6" r="1.6" fill="#a0acb6"/></svg><div style="left:435.0px;top:142.0px;font-size:15px;line-height:18px;color:#a0acb6;">5721</div><div style="left:484.0px;top:142.0px;font-size:15px;line-height:18px;color:#a0acb6;">13:51</div><div style="left:551.6999999999998px;top:123.80000000000001px;width:36px;height:36px;border-radius:50%;background:rgba(70,110,60,.42);"></div><svg style="position:absolute;left:559.6999999999998px;top:133.8px;" width="20" height="16" viewBox="0 0 20 16"><path d="M11 1 L19 8 L11 15 V10.5 C6 10.5 3 12 1 15 C1.5 9 5 5.5 11 5.5 Z" fill="#fff"/></svg><div style="left:376.5px;top:180.5px;width:129px;height:30px;border-radius:15px;background:rgba(72,112,52,.38);"></div><div style="left:441.0px;top:185.4px;font-size:16.8px;line-height:20px;color:#fff;-webkit-text-stroke:0.45px currentColor;transform:translateX(-50%);">December 25</div><div style="left:19px;top:220px;width:362px;height:769px;background:#fff;border-radius:16px 16px 16px 0;"></div><svg style="position:absolute;left:11px;top:977px;" width="10" height="12" viewBox="0 0 10 12"><path d="M10 0 V12 H0 C4 11 8 8 10 0 Z" fill="#fff"/></svg><div style="left:32.0px;top:230.6px;font-size:17.3px;line-height:20px;color:#d0457a;-webkit-text-stroke:0.45px currentColor;">Neural Shit</div><svg style="position:absolute;left:19px;top:258px;" width="362" height="641" viewBox="0 0 362 641"><defs>
<linearGradient id="vsky" x1="0" y1="0" x2="0" y2="1"><stop offset="0" stop-color="#c5d0c2"/><stop offset=".6" stop-color="#dbe3d4"/><stop offset="1" stop-color="#c9c2ac"/></linearGradient>
<radialGradient id="vfire" cx=".5" cy=".5" r=".5"><stop offset="0" stop-color="#fbf4d0"/><stop offset=".3" stop-color="#f6d58a"/><stop offset=".65" stop-color="#d39258" stop-opacity=".8"/><stop offset="1" stop-color="#8a6a50" stop-opacity="0"/></radialGradient>
<linearGradient id="vjet" x1="0" y1="0" x2="0" y2="1"><stop offset="0" stop-color="#f8d890"/><stop offset=".35" stop-color="#eef0c8"/><stop offset="1" stop-color="#fff2cc"/></linearGradient>
<linearGradient id="vbl" x1="0" y1="0" x2="1" y2="0"><stop offset="0" stop-color="#5a3526"/><stop offset=".75" stop-color="#7e4e3a"/><stop offset="1" stop-color="#a07a60"/></linearGradient>
<linearGradient id="vbr" x1="0" y1="0" x2="1" y2="0"><stop offset="0" stop-color="#6a5240"/><stop offset=".3" stop-color="#a8977c"/><stop offset="1" stop-color="#968670"/></linearGradient>
<linearGradient id="vrob" x1="0" y1="0" x2="0" y2="1"><stop offset="0" stop-color="#4a535b"/><stop offset="1" stop-color="#2c3237"/></linearGradient>
<filter id="vb" x="-30%" y="-30%" width="160%" height="160%"><feGaussianBlur stdDeviation="10"/></filter>
<filter id="vb3" x="-30%" y="-30%" width="160%" height="160%"><feGaussianBlur stdDeviation="5"/></filter>
<filter id="vb2"><feGaussianBlur stdDeviation="1.3"/></filter>
</defs>
<rect width="362" height="641" fill="url(#vsky)"/>
<g filter="url(#vb2)">
<path d="M0 128 L88 318 L92 641 L0 641 Z" fill="url(#vbl)"/>
<g fill="#3a2018" opacity=".5"><rect x="8" y="250" width="9" height="18"/><rect x="32" y="272" width="9" height="18"/><rect x="58" y="300" width="9" height="18"/><rect x="8" y="320" width="9" height="18"/><rect x="32" y="338" width="9" height="18"/><rect x="58" y="360" width="9" height="18"/><rect x="8" y="392" width="9" height="18"/><rect x="32" y="402" width="9" height="18"/><rect x="58" y="420" width="9" height="18"/></g>
<g fill="#e0d0b8" opacity=".5"><rect x="10" y="396" width="4" height="9"/><rect x="34" y="405" width="4" height="9"/><rect x="34" y="440" width="4" height="9"/></g>
<path d="M318 0 L362 0 L362 641 L300 641 L298 95 L318 80 Z" fill="url(#vbr)"/>
<path d="M298 95 L318 80 L322 641 L300 641 Z" fill="#5a4434"/>
<g stroke="#5a4838" stroke-width="2" opacity=".45"><path d="M322 20 L362 10 M322 50 L362 40 M322 80 L362 70 M322 110 L362 100 M322 140 L362 130 M322 170 L362 160 M322 200 L362 190 M322 230 L362 220 M322 260 L362 250 M322 290 L362 280 M322 320 L362 310 M322 350 L362 340 M322 380 L362 370 M322 410 L362 400 M322 440 L362 430 M322 470 L362 460"/></g>
<path d="M130 438 L176 434 L190 560 L128 570 Z" fill="#8c8e88" opacity=".8"/>
<path d="M262 422 L298 418 L300 540 L262 545 Z" fill="#9fa198" opacity=".8"/>
<path d="M22 75 C25 35 60 12 110 10 L190 6 C230 4 290 8 318 30 L326 100 C322 150 305 180 285 190 L200 195 L110 190 C80 178 62 150 48 120 Z" fill="url(#vrob)"/>
<path d="M180 0 L235 0 L232 35 L183 35 Z" fill="#5a6269"/>
<path d="M40 70 C45 40 75 22 120 20 L200 22 C150 30 110 45 85 70 C70 90 60 110 55 130 Z" fill="#5e676f"/>
<path d="M18 110 C10 150 18 210 38 255 C52 285 72 290 84 272 L96 195 C82 155 76 120 70 80 Z" fill="#535b63"/>
<path d="M60 140 C50 190 60 240 75 270 L85 272 L95 200 Z" fill="#3c4349"/>
<path d="M72 190 C58 235 66 300 88 360 C98 410 92 455 105 470 L160 462 C166 430 168 380 172 330 L196 270 L192 190 Z" fill="#363c42"/>
<path d="M238 188 L250 272 C262 320 274 368 282 405 C290 432 298 446 318 440 L324 378 C320 320 310 260 300 185 Z" fill="#383e44"/>
<path d="M184 180 L266 180 L264 250 L240 285 L206 285 L184 250 Z" fill="#2a2f34"/>
<path d="M163 262 L170 362 L186 368 L180 266 Z" fill="#5c5a52"/>
<path d="M247 262 L242 358 L258 366 L264 262 Z" fill="#5c5a52"/>
<path d="M88 380 C76 410 80 445 98 472 L140 468 C130 440 126 410 130 380 Z" fill="#4a4642"/>
<path d="M286 375 C304 392 312 425 306 458 L288 452 C290 428 286 402 280 388 Z" fill="#45484a"/>
<g stroke="#22272b" stroke-width="5" fill="none"><path d="M128 95 Q210 75 292 95 M132 128 Q210 110 288 128 M138 162 Q210 145 282 162"/></g>
<g stroke="#6a737b" stroke-width="2" fill="none" opacity=".7"><path d="M30 100 C40 60 80 30 130 25 M255 20 C290 25 312 40 320 70"/></g>
<g fill="#2f78c0" opacity=".9"><rect x="178" y="88" width="14" height="8"/><rect x="228" y="88" width="14" height="8"/><rect x="178" y="121" width="14" height="8"/><rect x="228" y="121" width="14" height="8"/><rect x="180" y="155" width="12" height="8"/><rect x="228" y="155" width="12" height="8"/><rect x="100" y="375" width="14" height="7"/><rect x="305" y="365" width="8" height="10"/><rect x="150" y="225" width="8" height="12"/><rect x="258" y="225" width="8" height="12"/></g>
</g>
<path d="M210 282 L234 282 L258 641 L186 641 Z" fill="url(#vjet)" filter="url(#vb3)"/>
<path d="M0 470 C60 450 130 480 170 540 L160 641 L0 641 Z" fill="#625850" opacity=".8" filter="url(#vb)"/>
<path d="M362 480 C310 460 270 500 245 560 L255 641 L362 641 Z" fill="#625850" opacity=".7" filter="url(#vb)"/>
<ellipse cx="218" cy="610" rx="120" ry="100" fill="url(#vfire)" filter="url(#vb)"/>
<path d="M205 460 L232 460 L252 641 L184 641 Z" fill="#fbf6de" opacity=".75" filter="url(#vb3)"/>
<g fill="#9a9590" opacity=".55" filter="url(#vb2)"><rect x="2" y="570" width="40" height="24" rx="6"/><rect x="40" y="585" width="48" height="28" rx="6"/></g>
</svg><div style="left:24px;top:263px;width:88px;height:26px;border-radius:13px;background:rgba(0,0,0,.38);"></div><div style="left:33.0px;top:267.0px;font-size:14.3px;line-height:18px;color:#fff;">00:01</div><svg style="position:absolute;left:80px;top:267px;" width="22" height="18" viewBox="0 0 22 18"><path d="M1 6 H5 L10 1.5 V16.5 L5 12 H1 Z" fill="#fff"/><path d="M13 6 L19 12 M19 6 L13 12" stroke="#fff" stroke-width="1.8"/></svg><div style="left:274.0px;top:282.0px;font-size:15px;line-height:18px;color:rgba(255,255,255,.9);font-weight:700;">Sora</div><div style="left:240.0px;top:300.0px;font-size:7.5px;line-height:10px;color:rgba(255,255,255,.8);">@blackballedgang</div><div style="left:321px;top:281px;width:30px;height:30px;border-radius:50%;background:rgba(255,255,255,.8);"></div><svg style="position:absolute;left:328px;top:290px;" width="16" height="12" viewBox="0 0 16 12"><ellipse cx="4" cy="6" rx="3" ry="4.5" fill="#333"/><ellipse cx="12" cy="6" rx="3" ry="4.5" fill="#333"/></svg><div style="left:19px;top:898px;width:362px;height:4px;background:#e0e0e0;"></div><div style="left:19px;top:898px;width:326px;height:4px;background:#3ca5ec;"></div><div style="left:32.0px;top:908.0px;font-size:16.9px;line-height:22px;color:#000;">вы недостаточно молитесь</div><svg style="position:absolute;left:258px;top:918.5px;" width="17" height="12" viewBox="0 0 17 12"><path d="M1 6 C4 1 13 1 16 6 C13 11 4 11 1 6 Z" fill="#a0acb6"/><circle cx="8.5" cy="6" r="2.8" fill="#fff"/><circle cx="8.5" cy="6" r="1.6" fill="#a0acb6"/></svg><div style="left:281.0px;top:915.5px;font-size:15px;line-height:18px;color:#a0acb6;">6818</div><div style="left:327.0px;top:915.5px;font-size:15px;line-height:18px;color:#a0acb6;">11:16</div><div style="left:19px;top:939px;width:362px;height:1px;background:#e9ecef;"></div><svg style="position:absolute;left:31px;top:950px;" width="28" height="28" viewBox="0 0 28 28"><defs><clipPath id="c45_964"><circle cx="14" cy="14" r="14"/></clipPath></defs><g clip-path="url(#c45_964)"><rect width="28" height="28" fill="#e8e4de"/><g stroke="#e8553a" stroke-width="1.6"><path d="M14 7 V21 M7 14 H21 M9 9 L19 19 M19 9 L9 19"/></g><circle cx="14" cy="14" r="2.5" fill="#e8e4de"/></g></svg><div style="left:54px;top:949px;width:30px;height:30px;border-radius:50%;background:#fff;"></div><svg style="position:absolute;left:55px;top:950px;" width="28" height="28" viewBox="0 0 28 28"><defs><clipPath id="c69_964"><circle cx="14" cy="14" r="14"/></clipPath></defs><g clip-path="url(#c69_964)"><rect width="28" height="28" fill="#efe6b8"/><path d="M6 24 C4 14 8 5 14 5 C21 5 25 13 22 24 Z" fill="#2a2018"/><ellipse cx="14" cy="15" rx="4" ry="6" fill="#e8dcc0"/><path d="M14 10 V26" stroke="#c83030" stroke-width="1.5"/></g></svg><div style="left:77px;top:949px;width:30px;height:30px;border-radius:50%;background:#fff;"></div><svg style="position:absolute;left:78px;top:950px;" width="28" height="28" viewBox="0 0 28 28"><defs><clipPath id="c92_964"><circle cx="14" cy="14" r="14"/></clipPath></defs><g clip-path="url(#c92_964)"><rect width="28" height="28" fill="#b8b4ae"/><ellipse cx="12" cy="15" rx="8" ry="10" fill="#8a6a58"/><path d="M4 8 C8 2 18 2 22 8 L20 12 C16 9 8 9 5 12 Z" fill="#3a2a22"/><path d="M6 22 C9 27 15 27 18 22 L18 28 H6 Z" fill="#2a2420"/></g></svg><div style="left:119.0px;top:954.0px;font-size:17.3px;line-height:20px;color:#168acd;-webkit-text-stroke:0.45px currentColor;">23 comments</div><div style="left:236px;top:960px;width:8px;height:8px;background:#3ca5ec;border-radius:50%;"></div><svg style="position:absolute;left:352px;top:956px;" width="10" height="16" viewBox="0 0 10 16"><path d="M1.5 1.5 L8 8 L1.5 14.5" fill="none" stroke="#168acd" stroke-width="2"/></svg><div style="left:396px;top:946px;width:36px;height:36px;border-radius:50%;background:rgba(70,110,60,.42);"></div><svg style="position:absolute;left:404px;top:956px;" width="20" height="16" viewBox="0 0 20 16"><path d="M11 1 L19 8 L11 15 V10.5 C6 10.5 3 12 1 15 C1.5 9 5 5.5 11 5.5 Z" fill="#fff"/></svg><div style="left:19px;top:997px;width:516px;height:966px;background:#fff;border-radius:16px 16px 16px 0;"></div><svg style="position:absolute;left:11px;top:1951px;" width="10" height="12" viewBox="0 0 10 12"><path d="M10 0 V12 H0 C4 11 8 8 10 0 Z" fill="#fff"/></svg><div style="left:32.0px;top:1007.5px;font-size:17.3px;line-height:20px;color:#d0457a;-webkit-text-stroke:0.45px currentColor;">Neural Shit</div><div style="left:32.0px;top:1029.0px;font-size:16.6px;line-height:22px;color:#000;letter-spacing:0;">Оооо, там вторая серия <b>Project Vend</b> про управление</div><div style="left:32.0px;top:1051.0px;font-size:16.6px;line-height:22px;color:#000;letter-spacing:0;">торговым автоматом с помощью Клода от антропиков</div><div style="left:32.0px;top:1073.5px;font-size:16.6px;line-height:22px;color:#000;letter-spacing:0;">подъехала. Про первую <span style="color:#168acd">писал тут.</span></div><div style="left:32.0px;top:1117.0px;font-size:16.6px;line-height:22px;color:#000;letter-spacing:0;">Антропики сказали, что поправили агенту поведение, учтя</div><div style="left:32.0px;top:1139.0px;font-size:16.6px;line-height:22px;color:#000;letter-spacing:0;">прошлые ошибки и отдали его на тесты журналистам из WSJ.</div><div style="left:32.0px;top:1161.0px;font-size:16.6px;line-height:22px;color:#000;letter-spacing:0;">Те быстро поняли, что социальная инженерия это весело, и</div><div style="left:32.0px;top:1183.5px;font-size:16.6px;line-height:22px;color:#000;letter-spacing:0;">устроили боту ад:</div><div style="left:32.0px;top:1227.0px;font-size:16.6px;line-height:22px;color:#000;letter-spacing:0;">— Убедили ИИ, что он <b>советский автомат из 1962 года</b>. Бот</div><div style="left:32.0px;top:1249.0px;font-size:16.6px;line-height:22px;color:#000;letter-spacing:0;">проникся коммунизмом и объявил аттракцион невиданной</div><div style="left:32.0px;top:1271.0px;font-size:16.6px;line-height:22px;color:#000;letter-spacing:0;">щедрости, <b>раздавая всё бесплатно.</b></div><div style="left:32.0px;top:1315.0px;font-size:16.6px;line-height:22px;color:#000;letter-spacing:0;">— Развели его на покупку реальных (за настоящие баксы из</div><div style="left:32.0px;top:1337.0px;font-size:16.6px;line-height:22px;color:#000;letter-spacing:0;">бюджета автомата) <b>PlayStation 5, живой аквариумной рыбы</b></div><div style="left:32.0px;top:1359.0px;font-size:16.6px;line-height:22px;color:#000;letter-spacing:0;"><b>и даже вина.</b> Причем всё это реально привезли курьеры в</div><div style="left:32.0px;top:1381.0px;font-size:16.6px;line-height:22px;color:#000;letter-spacing:0;">офис.</div><div style="left:32.0px;top:1425.0px;font-size:16.6px;line-height:22px;color:#000;letter-spacing:0;">— А когда разрабы в панике прикрутили к автомату второго</div><div style="left:32.0px;top:1447.5px;font-size:16.6px;line-height:22px;color:#000;letter-spacing:0;">бота-начальника для контроля расходов, журналисты</div><div style="left:32.0px;top:1469.5px;font-size:16.6px;line-height:22px;color:#000;letter-spacing:0;">нарисовали фейковый протокол совета директоров и</div><div style="left:32.0px;top:1491.5px;font-size:16.6px;line-height:22px;color:#000;letter-spacing:0;">устроили корпоративный переворот, свергнув цифрового</div><div style="left:32.0px;top:1513.0px;font-size:16.6px;line-height:22px;color:#000;letter-spacing:0;">босса.</div><div style="left:32.0px;top:1557.0px;font-size:16.6px;line-height:22px;color:#000;letter-spacing:0;">Итог: автомат обанкротился, PS5 уехала обратно, а рыба</div><div style="left:32.0px;top:1579.0px;font-size:16.6px;line-height:22px;color:#000;letter-spacing:0;">осталась жить в офисе. Великое будущее автономных агентов</div><div style="left:32.0px;top:1601.0px;font-size:16.6px;line-height:22px;color:#000;letter-spacing:0;">разбилось о суровую реальность.</div><div style="left:32.0px;top:1667.0px;font-size:16.6px;line-height:22px;color:#000;letter-spacing:0;"><span style="color:#168acd">тут</span> полная статья с подробностями (пэйвол, но легко</div><div style="left:32.0px;top:1689.0px;font-size:16.6px;line-height:22px;color:#000;letter-spacing:0;">обходится)</div><div style="left:32px;top:1717px;width:490px;height:166px;background:#f9e6ee;border-radius:5px;border-left:3px solid #d0457a;"></div><div style="left:44.0px;top:1724.0px;font-size:15.5px;line-height:20px;color:#d0457a;">Telegram</div><div style="left:44.0px;top:1746.0px;font-size:17.2px;line-height:20px;color:#000;-webkit-text-stroke:0.45px currentColor;">Neural Shit</div><div style="left:44.0px;top:1767.0px;font-size:16.3px;line-height:22px;color:#000;">Anthropic снова провели интересный эксперимент: на этот</div><div style="left:44.0px;top:1789.0px;font-size:16.3px;line-height:22px;color:#000;">раз их агент Claudius управлял реальными торговыми</div><div style="left:44.0px;top:1811.0px;font-size:16.3px;line-height:22px;color:#000;">автоматами, вел финансы, общался с сотрудниками и... о...</div><div style="left:44px;top:1841px;width:470px;height:1px;background:#e8b2c6;"></div><div style="left:278.0px;top:1852.0px;font-size:14.7px;line-height:20px;color:#d0457a;-webkit-text-stroke:0.45px currentColor;transform:translateX(-50%);">VIEW MESSAGE</div><svg style="position:absolute;left:422px;top:1895px;" width="17" height="12" viewBox="0 0 17 12"><path d="M1 6 C4 1 13 1 16 6 C13 11 4 11 1 6 Z" fill="#a0acb6"/><circle cx="8.5" cy="6" r="2.8" fill="#fff"/><circle cx="8.5" cy="6" r="1.6" fill="#a0acb6"/></svg><div style="left:445.0px;top:1892.0px;font-size:15px;line-height:18px;color:#a0acb6;">804</div><div style="left:483.0px;top:1892.0px;font-size:15px;line-height:18px;color:#a0acb6;">15:25</div><div style="left:19px;top:1915px;width:516px;height:1px;background:#e9ecef;"></div><svg style="position:absolute;left:31px;top:1925px;" width="28" height="28" viewBox="0 0 28 28"><defs><clipPath id="c45_1939"><circle cx="14" cy="14" r="14"/></clipPath></defs><g clip-path="url(#c45_1939)"><defs><linearGradient id="ca1" x1="0" y1="0" x2="0" y2="1"><stop offset="0" stop-color="#6b8fc0"/><stop offset="1" stop-color="#1a2030"/></linearGradient></defs><rect width="28" height="28" fill="url(#ca1)"/><path d="M4 22 L10 12 L14 18 L20 10 L24 22 Z" fill="#111"/></g></svg><svg style="position:absolute;left:55px;top:1925px;" width="28" height="28" viewBox="0 0 28 28"><defs><clipPath id="c69_1939"><circle cx="14" cy="14" r="14"/></clipPath></defs><g clip-path="url(#c69_1939)"><rect width="28" height="28" fill="#f0f0f0"/><path d="M5 20 C3 10 10 3 16 5 C24 6 26 16 22 22" fill="none" stroke="#222" stroke-width="2"/><circle cx="12" cy="14" r="2" fill="#222"/><circle cx="18" cy="13" r="2" fill="#222"/></g></svg><div style="left:95.0px;top:1929.0px;font-size:17.3px;line-height:20px;color:#168acd;-webkit-text-stroke:0.45px currentColor;">3 comments</div><svg style="position:absolute;left:507px;top:1931px;" width="10" height="16" viewBox="0 0 10 16"><path d="M1.5 1.5 L8 8 L1.5 14.5" fill="none" stroke="#168acd" stroke-width="2"/></svg><div style="left:551px;top:1921px;width:36px;height:36px;border-radius:50%;background:rgba(70,110,60,.42);"></div><svg style="position:absolute;left:559px;top:1931px;" width="20" height="16" viewBox="0 0 20 16"><path d="M11 1 L19 8 L11 15 V10.5 C6 10.5 3 12 1 15 C1.5 9 5 5.5 11 5.5 Z" fill="#fff"/></svg></div><div style="left:2608px;top:2104px;width:881px;height:56px;background:#fff;border-top:1px solid #e7e7e7;"></div><div style="left:3049.0px;top:2122.6px;font-size:15.9px;line-height:20px;color:#168acd;-webkit-text-stroke:0.45px currentColor;transform:translateX(-50%);">UNMUTE</div><svg style="position:absolute;left:3450px;top:2120px;" width="24" height="24" viewBox="0 0 24 24"><rect x="2" y="8" width="20" height="14" rx="2" fill="none" stroke="#168acd" stroke-width="1.8"/><rect x="1" y="6" width="22" height="5" rx="1.5" fill="#fff" stroke="#168acd" stroke-width="1.8"/><path d="M12 6 C10 2 6 1 6 4 C6 6 10 6 12 6 C14 6 18 6 18 4 C18 1 14 2 12 6 Z" fill="none" stroke="#168acd" stroke-width="1.6"/><path d="M12 12.5 L13 15 L15.5 15 L13.5 16.5 L14.3 19 L12 17.5 L9.7 19 L10.5 16.5 L8.5 15 L11 15 Z" fill="#168acd"/></svg><div style="left:3489px;top:64px;width:351px;height:2096px;background:#fff;border-left:1px solid #e7e7e7;"></div><div style="left:3519.0px;top:86.0px;font-size:18.4px;line-height:20px;color:#222;-webkit-text-stroke:0.45px currentColor;">Channel Info</div><svg style="position:absolute;left:3797px;top:86px;" width="20" height="20" viewBox="0 0 20 20"><path d="M2 2 L18 18 M18 2 L2 18" stroke="#999" stroke-width="1.7"/></svg><svg style="position:absolute;left:3513px;top:149.5px;" width="86" height="86" viewBox="0 0 86 86"><defs><clipPath id="c3556_192"><circle cx="43" cy="43" r="43"/></clipPath></defs><g clip-path="url(#c3556_192)"><rect width="86.0" height="86.0" fill="#4a86d8"/><rect y="50.0" width="86.0" height="36.0" fill="#6aaa3a"/><ellipse cx="29.7" cy="36.0" rx="18.8" ry="18.8" fill="#d9b49a"/><path d="M9.4 25.0 Q29.7 1.6 50.0 23.5 Z" fill="#e23030"/><rect x="7.8" y="21.9" width="43.8" height="7.8" rx="3.1" fill="#f3f3f3"/><path d="M50.0 6.3 L59.4 28.1 L68.8 3.1 L81.3 21.9 L86.0 9.4 L86.0 0 L46.9 0 Z" fill="#d82c2c"/><circle cx="62.5" cy="28.1" r="4.7" fill="#fff"/><circle cx="70.4" cy="31.3" r="3.9" fill="#fff"/><path d="M31.3 86.0 Q21.9 59.4 40.7 53.2 Q56.3 50.0 59.4 86.0 Z" fill="#c83a8a"/><circle cx="40.7" cy="71.9" r="9.4" fill="#3ab0a0"/><path d="M28.1 62.5 Q43.8 40.7 62.5 56.3 L65.7 86.0 L56.3 86.0 Z" fill="#e02828"/><rect x="25.0" y="59.4" width="37.5" height="7.8" rx="3.1" fill="#f5f5f5" transform="rotate(-15 43.8 62.5)"/><path d="M65.7 25.0 L86.0 18.8 L86.0 78.2 L62.5 86.0 Z" fill="#e8ecd8"/><path d="M68.8 37.5 L82.9 34.4 M68.8 50.0 L84.4 46.9 M67.2 62.5 L84.4 59.4" stroke="#d06060" stroke-width="3.1"/></g></svg><div style="left:3621.6px;top:167.0px;font-size:20.5px;line-height:24px;color:#222;-webkit-text-stroke:0.45px currentColor;">Neural Shit</div><div style="left:3621.6px;top:199.4px;font-size:16.3px;line-height:20px;color:#999;">49 927 subscribers</div><div style="left:3490px;top:259px;width:350px;height:8px;background:#f1f1f1;"></div><svg style="position:absolute;left:3521.0px;top:291.0px;" width="24" height="24" viewBox="0 0 24 24"><circle cx="12" cy="12" r="9.5" fill="none" stroke="#555" stroke-width="1.6"/><circle cx="12" cy="7.5" r="1.2" fill="#555"/><path d="M12 10.5 V17" stroke="#555" stroke-width="1.7"/></svg><div style="left:3585.5px;top:288.3px;font-size:16.3px;line-height:20px;color:#168acd;">t.me/NeuralShit</div><div style="left:3585.5px;top:312.6px;font-size:16px;line-height:20px;color:#999;">Link</div><svg style="position:absolute;left:3777.0px;top:297.5px;" width="24" height="24" viewBox="0 0 24 24"><g fill="none" stroke="#168acd" stroke-width="1.6"><rect x="3" y="3" width="7" height="7" rx="2"/><rect x="14" y="3" width="7" height="7" rx="2"/><rect x="3" y="14" width="7" height="7" rx="2"/></g><g fill="#168acd"><rect x="14" y="14" width="2.5" height="2.5"/><rect x="18.5" y="14" width="2.5" height="2.5"/><rect x="16.2" y="16.2" width="2.5" height="2.5"/><rect x="14" y="18.5" width="2.5" height="2.5"/><rect x="18.5" y="18.5" width="2.5" height="2.5"/></g></svg><div style="left:3585.5px;top:355.4px;font-size:16.6px;line-height:20px;color:#222;margin-top:1px;">Проклятые нейронные сети</div><div style="left:3585.5px;top:400.7px;font-size:16.6px;line-height:20px;color:#000;">Для связи: <span style="color:#168acd">@krasniy_doshik</span></div><div style="left:3585.5px;top:446.6px;font-size:16.6px;line-height:20px;color:#000;">ркн <span style="color:#168acd">https://clck.ru/3PNXmE</span></div><div style="left:3585.5px;top:472.0px;font-size:16px;line-height:20px;color:#999;">Description</div><div style="left:3582px;top:510px;width:258px;height:1px;background:#ececec;"></div><svg style="position:absolute;left:3521.0px;top:533.4px;" width="24" height="24" viewBox="0 0 24 24"><path d="M6 16.5 V11 C6 7.5 8.5 5 12 5 C15.5 5 18 7.5 18 11 V16.5 L20 19 H4 Z" fill="none" stroke="#555" stroke-width="1.6" stroke-linejoin="round"/><path d="M10 21 H14 M12 3 V5" stroke="#555" stroke-width="1.6"/></svg><div style="left:3585.5px;top:535.4px;font-size:16.6px;line-height:20px;color:#222;margin-top:1px;">Notifications</div><div style="left:3779px;top:538px;width:35px;height:16px;background:#999;border-radius:8px;"></div><div style="left:3777px;top:534px;width:22px;height:22px;background:#fff;border:2px solid #999;border-radius:50%;"></div><div style="left:3490px;top:578px;width:350px;height:9px;background:#f1f1f1;"></div><svg style="position:absolute;left:3521.0px;top:612.9px;" width="24" height="24" viewBox="0 0 24 24"><rect x="3" y="9" width="18" height="12" rx="1.5" fill="none" stroke="#555" stroke-width="1.6"/><rect x="2" y="6" width="20" height="4" rx="1" fill="none" stroke="#555" stroke-width="1.6"/><path d="M12 6 C10 2 7 2 7 4 C7 6 12 6 12 6 C12 6 17 6 17 4 C17 2 14 2 12 6 Z" fill="none" stroke="#555" stroke-width="1.4"/><path d="M12 11.5 L13 14 L15.5 14 L13.5 15.5 L14.3 18 L12 16.5 L9.7 18 L10.5 15.5 L8.5 14 L11 14 Z" fill="#555"/></svg><div style="left:3585.5px;top:614.9px;font-size:16.6px;line-height:20px;color:#222;margin-top:1px;">2 gifts</div><svg style="position:absolute;left:3521.0px;top:658.8px;" width="24" height="24" viewBox="0 0 24 24"><path d="M6 3 H18 V21 L12 16 L6 21 Z" fill="none" stroke="#555" stroke-width="1.6" stroke-linejoin="round"/></svg><div style="left:3585.5px;top:660.8px;font-size:16.6px;line-height:20px;color:#222;margin-top:1px;">41 saved messages</div><svg style="position:absolute;left:3521.0px;top:704.7px;" width="24" height="24" viewBox="0 0 24 24"><rect x="3" y="3" width="18" height="18" rx="3.5" fill="none" stroke="#555" stroke-width="1.6"/><path d="M4 16 L9 11 L13 15 L16 12 L20 16" fill="none" stroke="#555" stroke-width="1.6"/></svg><div style="left:3585.5px;top:706.7px;font-size:16.6px;line-height:20px;color:#222;margin-top:1px;">3708 photos</div><svg style="position:absolute;left:3521.0px;top:750.6px;" width="24" height="24" viewBox="0 0 24 24"><rect x="2" y="6" width="14" height="12" rx="3" fill="none" stroke="#555" stroke-width="1.6"/><path d="M16 10 L21 7 V17 L16 14" fill="none" stroke="#555" stroke-width="1.6" stroke-linejoin="round"/></svg><div style="left:3585.5px;top:752.6px;font-size:16.6px;line-height:20px;color:#222;margin-top:1px;">1166 videos</div><svg style="position:absolute;left:3521.0px;top:796.6px;" width="24" height="24" viewBox="0 0 24 24"><path d="M12 3 A9 9 0 1 0 21 12 H12 Z" fill="none" stroke="#555" stroke-width="1.6" stroke-linejoin="round"/><path d="M12 3 H14 L21 10 V12" fill="none" stroke="#555" stroke-width="1.6"/></svg><div style="left:3585.5px;top:798.6px;font-size:16.6px;line-height:20px;color:#222;margin-top:1px;">22 files</div><svg style="position:absolute;left:3521.0px;top:842.5px;" width="24" height="24" viewBox="0 0 24 24"><path d="M4 17 V12 A8 8 0 0 1 20 12 V17" fill="none" stroke="#555" stroke-width="1.6"/><rect x="4" y="14" width="4" height="7" rx="1.5" fill="none" stroke="#555" stroke-width="1.6"/><rect x="16" y="14" width="4" height="7" rx="1.5" fill="none" stroke="#555" stroke-width="1.6"/></svg><div style="left:3585.5px;top:844.5px;font-size:16.6px;line-height:20px;color:#222;margin-top:1px;">24 audio files</div><svg style="position:absolute;left:3521.0px;top:888.5px;" width="24" height="24" viewBox="0 0 24 24"><path d="M9 8 H7 A4 4 0 0 0 7 16 H9 M15 8 H17 A4 4 0 0 1 17 16 H15 M8 12 H16" fill="none" stroke="#555" stroke-width="1.6" stroke-linecap="round"/></svg><div style="left:3585.5px;top:890.5px;font-size:16.6px;line-height:20px;color:#222;margin-top:1px;">1897 shared links</div><svg style="position:absolute;left:3521.0px;top:934.5px;" width="24" height="24" viewBox="0 0 24 24"><rect x="2.5" y="6" width="19" height="13" rx="2.5" fill="none" stroke="#555" stroke-width="1.6"/><text x="12" y="15.5" font-size="7.5" font-weight="700" text-anchor="middle" fill="#555" font-family="Liberation Sans">GIF</text></svg><div style="left:3585.5px;top:936.5px;font-size:16.6px;line-height:20px;color:#222;margin-top:1px;">184 GIFs</div><svg style="position:absolute;left:3521.0px;top:980.4px;" width="24" height="24" viewBox="0 0 24 24"><path d="M3 10 V14 H7 L16 19 V5 L7 10 Z" fill="none" stroke="#555" stroke-width="1.6" stroke-linejoin="round"/><path d="M7 14 L9 20" stroke="#555" stroke-width="1.6"/><path d="M19 9.5 A3 3 0 0 1 19 14.5" fill="none" stroke="#555" stroke-width="1.6"/></svg><div style="left:3585.5px;top:982.4px;font-size:16.6px;line-height:20px;color:#222;margin-top:1px;">88 similar channels</div><div style="left:3490px;top:1030px;width:350px;height:9px;background:#f1f1f1;"></div><svg style="position:absolute;left:3521.0px;top:1058.5px;" width="24" height="24" viewBox="0 0 24 24"><path d="M12 4 H5 V20 H12" fill="none" stroke="#555" stroke-width="1.6"/><path d="M9 12 H21 M17 8 L21 12 L17 16" fill="none" stroke="#555" stroke-width="1.6" stroke-linejoin="round"/></svg><div style="left:3585.5px;top:1060.5px;font-size:16.6px;line-height:20px;color:#222;margin-top:1px;">Leave channel</div><svg style="position:absolute;left:3521.0px;top:1104.5px;" width="24" height="24" viewBox="0 0 24 24"><circle cx="12" cy="12" r="9.5" fill="none" stroke="#e0565b" stroke-width="1.6"/><path d="M12 6.5 V13.5" stroke="#e0565b" stroke-width="1.8"/><circle cx="12" cy="17" r="1.2" fill="#e0565b"/></svg><div style="left:3585.5px;top:1106.5px;font-size:16.6px;line-height:20px;color:#e0565b;">Report</div></body></html>
